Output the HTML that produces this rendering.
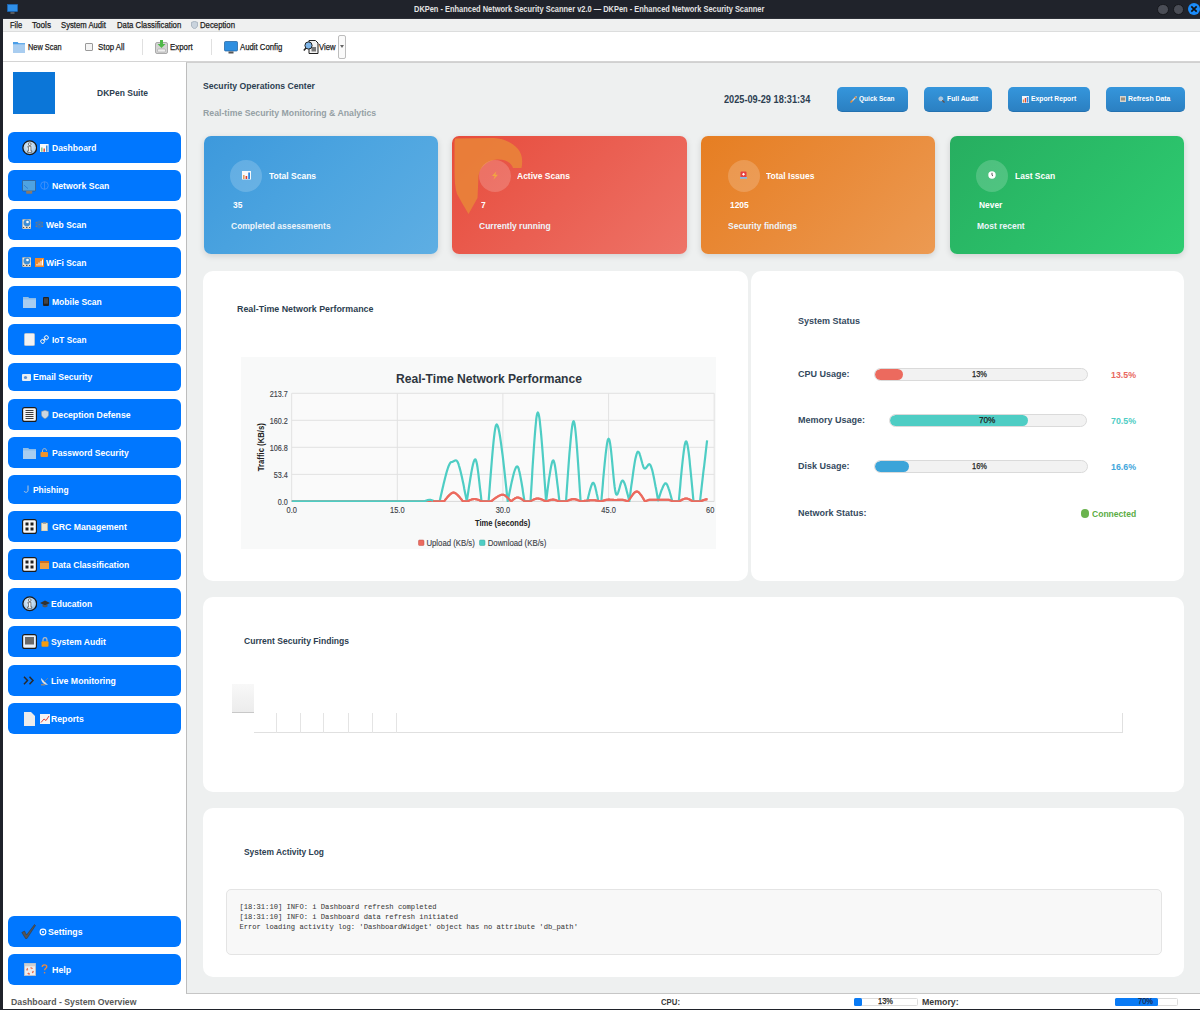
<!DOCTYPE html>
<html><head><meta charset="utf-8">
<style>
*{box-sizing:border-box;margin:0;padding:0}
html,body{width:1200px;height:1010px;overflow:hidden;background:#1f222a;font-family:"Liberation Sans",sans-serif}
.a{position:absolute}
.t{position:absolute;white-space:nowrap;line-height:1}
.r{-webkit-text-stroke:0.25px currentColor}
.m{-webkit-text-stroke:0.05px currentColor}
.nav{position:absolute;left:8px;width:173px;background:#0077ff;border-radius:6px}
.card{position:absolute;top:136px;height:118px;border-radius:7px;box-shadow:0 2px 6px rgba(0,0,0,.13)}
.circ{position:absolute;width:32px;height:32px;border-radius:50%;background:rgba(255,255,255,.18)}
.panel{position:absolute;background:#fff;border-radius:10px}
.hbtn{position:absolute;top:87px;height:24.5px;border-radius:5px;background:linear-gradient(#3596dc,#2b80c2);border-bottom:1px solid #2371b0}
.bar{position:absolute;height:13px;border-radius:6.5px;background:#f2f2f2;border:1px solid #dadada;overflow:hidden}
.chunk{position:absolute;left:0;top:0;bottom:0;border-radius:6px}
</style></head><body>
<div class="a" style="left:0;top:0;width:1200px;height:19px;background:#20232b"></div>
<div class="a" style="left:3px;top:17.5px;width:1197px;height:1px;background:#2c2f37"></div>
<div class="a" style="left:3px;top:19px;width:1197px;height:13px;background:#eff0f0;border-bottom:1px solid #dcdddd"></div>
<div class="a" style="left:3px;top:32px;width:1197px;height:30px;background:#fff;border-bottom:1px solid #d4d4d4"></div>
<div class="a" style="left:3px;top:62px;width:183px;height:932px;background:#fff"></div>
<div class="a" style="left:186px;top:62px;width:1014px;height:932px;background:#eef0f0;border-left:1px solid #bdbdbd;border-top:1px solid #d0d0d0;border-bottom:1px solid #c6c6c6"></div>
<div class="a" style="left:3px;top:994px;width:1197px;height:14.5px;background:#fff"></div>
<svg class="a" style="left:7px;top:4px" width="11" height="11" viewBox="0 0 11 11"><rect x="0.5" y="0.5" width="10" height="7" fill="#2f8fe8" stroke="#1b6cc0" stroke-width="0.6"/><rect x="3.5" y="8.2" width="4" height="1.6" fill="#666"/></svg>
<div class="t" style="left:413.50px;top:4.79px;font-size:8.93px;font-weight:bold;color:#e4e4e4;font-family:'Liberation Sans',sans-serif;transform:scaleX(0.8351);transform-origin:0 0;">DKPen - Enhanced Network Security Scanner v2.0 — DKPen - Enhanced Network Security Scanner</div>
<div class="a" style="left:1157px;top:3.5px;width:11.5px;height:11.5px;border-radius:50%;background:#4a4d56;border:1px solid #16181d"></div>
<div class="a" style="left:1172.5px;top:3.5px;width:11.5px;height:11.5px;border-radius:50%;background:#4a4d56;border:1px solid #16181d"></div>
<div class="a" style="left:1188px;top:3px;width:12px;height:12px;border-radius:50%;background:#1b8cfa"></div>
<svg class="a" style="left:1190px;top:5px" width="8" height="8" viewBox="0 0 8 8"><path d="M1.3 1.3L6.7 6.7M6.7 1.3L1.3 6.7" stroke="#111" stroke-width="1.7"/></svg>
<div class="t r" style="left:10.00px;top:21.10px;font-size:8.82px;font-weight:normal;color:#1c1c1c;font-family:'Liberation Sans',sans-serif;transform:scaleX(0.8586);transform-origin:0 0;">File</div>
<div class="t r" style="left:32.00px;top:21.10px;font-size:8.82px;font-weight:normal;color:#1c1c1c;font-family:'Liberation Sans',sans-serif;transform:scaleX(0.9230);transform-origin:0 0;">Tools</div>
<div class="t r" style="left:61.00px;top:21.10px;font-size:8.82px;font-weight:normal;color:#1c1c1c;font-family:'Liberation Sans',sans-serif;transform:scaleX(0.8742);transform-origin:0 0;">System Audit</div>
<div class="t r" style="left:116.70px;top:21.10px;font-size:8.82px;font-weight:normal;color:#1c1c1c;font-family:'Liberation Sans',sans-serif;transform:scaleX(0.8804);transform-origin:0 0;">Data Classification</div>
<div class="t r" style="left:200.00px;top:21.10px;font-size:8.82px;font-weight:normal;color:#1c1c1c;font-family:'Liberation Sans',sans-serif;transform:scaleX(0.8812);transform-origin:0 0;">Deception</div>
<svg class="a" style="left:191px;top:21px" width="7" height="8" viewBox="0 0 7 8"><path d="M3.5 0.3L6.6 1.4V4C6.6 5.9 5 7.2 3.5 7.8C2 7.2 0.4 5.9 0.4 4V1.4Z" fill="#c9d3dd" stroke="#8a99a8" stroke-width="0.6"/></svg>
<div class="t r" style="left:27.50px;top:42.72px;font-size:9.35px;font-weight:normal;color:#1c1c1c;font-family:'Liberation Sans',sans-serif;transform:scaleX(0.7912);transform-origin:0 0;">New Scan</div>
<div class="t r" style="left:97.50px;top:42.72px;font-size:9.35px;font-weight:normal;color:#1c1c1c;font-family:'Liberation Sans',sans-serif;transform:scaleX(0.8363);transform-origin:0 0;">Stop All</div>
<div class="t r" style="left:170.30px;top:42.72px;font-size:9.35px;font-weight:normal;color:#1c1c1c;font-family:'Liberation Sans',sans-serif;transform:scaleX(0.8405);transform-origin:0 0;">Export</div>
<div class="t r" style="left:239.70px;top:42.72px;font-size:9.35px;font-weight:normal;color:#1c1c1c;font-family:'Liberation Sans',sans-serif;transform:scaleX(0.8309);transform-origin:0 0;">Audit Config</div>
<div class="t r" style="left:319.00px;top:42.72px;font-size:9.35px;font-weight:normal;color:#1c1c1c;font-family:'Liberation Sans',sans-serif;transform:scaleX(0.8205);transform-origin:0 0;">View</div>
<svg class="a" style="left:13px;top:41px" width="12" height="12" viewBox="0 0 12 12"><path d="M0 1.2H4.5L5.5 2.3H12V12H0Z" fill="#a9cdf0"/><path d="M0 1H4.6L5.6 2.2H12V3.3H0Z" fill="#4a9ee8"/></svg>
<div class="a" style="left:85px;top:43px;width:8px;height:8px;border:1px solid #9a9a9a;background:#f4f4f4;border-radius:1px"></div>
<div class="a" style="left:142px;top:39px;width:1px;height:16px;background:#e0e0e0"></div>
<svg class="a" style="left:155px;top:40px" width="13" height="14" viewBox="0 0 13 14"><rect x="0.5" y="2.5" width="12" height="11" rx="1.5" fill="#d4d4d4" stroke="#8f8f8f" stroke-width="0.7"/><rect x="2.5" y="9" width="8" height="3" rx="1" fill="#eee" stroke="#999" stroke-width="0.5"/><path d="M5 0H8V4H10.5L6.5 8L2.5 4H5Z" fill="#4fb848"/></svg>
<div class="a" style="left:211px;top:39px;width:1px;height:16px;background:#e0e0e0"></div>
<svg class="a" style="left:224px;top:40.5px" width="14" height="13" viewBox="0 0 14 13"><rect x="0.5" y="0.5" width="13" height="9.5" rx="1" fill="#2e8fe0" stroke="#1c5f9e" stroke-width="0.7"/><rect x="4.5" y="10.5" width="5" height="2" fill="#555"/></svg>
<svg class="a" style="left:303px;top:39px" width="16" height="16" viewBox="0 0 16 16"><path d="M6 1.5H12.5L15 4V14.5H6Z" fill="#f2f2f2" stroke="#222" stroke-width="1"/><rect x="8.5" y="8" width="4.5" height="4.5" fill="#777"/><circle cx="5.5" cy="6.5" r="3.6" fill="#7fb6ea" stroke="#222" stroke-width="1"/><path d="M3 9L0.8 11.5" stroke="#222" stroke-width="1.5"/></svg>
<div class="a" style="left:338px;top:35px;width:8px;height:24px;border:1px solid #bdbdbd;border-radius:2px;background:#fafafa"></div>
<svg class="a" style="left:340px;top:45px" width="4" height="3" viewBox="0 0 4 3"><path d="M0 0H4L2 3Z" fill="#666"/></svg>
<div class="a" style="left:13px;top:72px;width:42px;height:42px;background:#0b76d8"></div>
<div class="t" style="left:97.00px;top:88.47px;font-size:9.66px;font-weight:bold;color:#2c3e50;font-family:'Liberation Sans',sans-serif;transform:scaleX(0.8798);transform-origin:0 0;">DKPen Suite</div>
<div class="nav" style="top:132px;height:31px"></div>
<svg class="a" style="left:21.6px;top:140.2px" width="15.5" height="15.5" viewBox="0 0 15.5 15.5"><defs><radialGradient id="ig" cx="0.45" cy="0.4" r="0.6"><stop offset="0" stop-color="#e6f2fb"/><stop offset="1" stop-color="#9cc3e6"/></radialGradient></defs><circle cx="7.75" cy="7.75" r="6.9" fill="url(#ig)" stroke="#1a1a1a" stroke-width="1.3"/><circle cx="7.75" cy="4.1" r="1.35" fill="#fff" stroke="#333" stroke-width="0.6"/><path d="M5.9 6.2H8.9V10.9H9.8V12.3H5.6V10.9H6.6V7.4H5.9Z" fill="#fff" stroke="#333" stroke-width="0.6"/></svg>
<svg class="a" style="left:40.2px;top:143.5px" width="8.6" height="8.3" viewBox="0 0 8.6 8.3"><rect width="8.6" height="8.3" fill="#f8fafc"/><rect x="1.2" y="3.5" width="1.3" height="4.3" fill="#6cc070"/><rect x="3.5" y="4.5" width="1.4" height="3.3" fill="#e8402c"/><rect x="6" y="1.5" width="1.5" height="6.3" fill="#3c8ee0"/></svg>
<div class="t" style="left:51.90px;top:142.83px;font-size:9.61px;font-weight:bold;color:#fff;font-family:'Liberation Sans',sans-serif;transform:scaleX(0.8848);transform-origin:0 0;">Dashboard</div>
<div class="nav" style="top:170px;height:31px"></div>
<svg class="a" style="left:22.3px;top:179.5px" width="14" height="14" viewBox="0 0 14 14"><rect x="0.4" y="0.4" width="13.2" height="10.6" rx="0.8" fill="#4ea3e2" stroke="#3a5a80" stroke-width="0.8"/><path d="M2 5L4 7L6 8.5" stroke="#2a78d0" stroke-width="0.8" fill="none"/><rect x="4.2" y="11" width="6" height="2.7" fill="#8a7a6a"/></svg>
<svg class="a" style="left:40.0px;top:181.2px" width="9" height="9" viewBox="0 0 9 9"><circle cx="4.5" cy="4.5" r="3.8" fill="none" stroke="#3d8ff8" stroke-width="1"/><path d="M4.5 0.7V8.3" stroke="#3d8ff8" stroke-width="0.9"/></svg>
<div class="t" style="left:51.50px;top:180.83px;font-size:9.61px;font-weight:bold;color:#fff;font-family:'Liberation Sans',sans-serif;transform:scaleX(0.9050);transform-origin:0 0;">Network Scan</div>
<div class="nav" style="top:209px;height:31px"></div>
<svg class="a" style="left:21.8px;top:219.3px" width="9.5" height="10.2" viewBox="0 0 9.5 10.2"><rect x="0.3" y="0.3" width="8.9" height="9.6" rx="1" fill="#e9e2d6" stroke="#9a8f80" stroke-width="0.5"/><circle cx="4.9" cy="4" r="3.4" fill="#3f8fd6"/><circle cx="5.5" cy="3" r="1.3" fill="#fff"/><rect x="1" y="8" width="1.2" height="1" fill="#555"/><rect x="4" y="8" width="1.5" height="1" fill="#555"/><rect x="7" y="8" width="1.2" height="1" fill="#555"/></svg>
<svg class="a" style="left:35.3px;top:219.8px" width="8.5" height="9" viewBox="0 0 8.5 9"><path d="M4.25 0.3L8.1 2.4V6.6L4.25 8.7L0.4 6.6V2.4Z" fill="#2d78cc"/><circle cx="1.3" cy="2.6" r="0.6" fill="#a07850"/><circle cx="7.2" cy="2.6" r="0.6" fill="#a07850"/><circle cx="4.25" cy="4.5" r="0.6" fill="#a07850"/><circle cx="1.3" cy="6.4" r="0.6" fill="#a07850"/><circle cx="7.2" cy="6.4" r="0.6" fill="#a07850"/></svg>
<div class="t" style="left:46.00px;top:219.83px;font-size:9.61px;font-weight:bold;color:#fff;font-family:'Liberation Sans',sans-serif;transform:scaleX(0.8854);transform-origin:0 0;">Web Scan</div>
<div class="nav" style="top:247px;height:31px"></div>
<svg class="a" style="left:21.8px;top:257.3px" width="9.5" height="10.2" viewBox="0 0 9.5 10.2"><rect x="0.3" y="0.3" width="8.9" height="9.6" rx="1" fill="#e9e2d6" stroke="#9a8f80" stroke-width="0.5"/><circle cx="4.9" cy="4" r="3.4" fill="#3f8fd6"/><circle cx="5.5" cy="3" r="1.3" fill="#fff"/><rect x="1" y="8" width="1.2" height="1" fill="#555"/><rect x="4" y="8" width="1.5" height="1" fill="#555"/><rect x="7" y="8" width="1.2" height="1" fill="#555"/></svg>
<svg class="a" style="left:35.0px;top:257.5px" width="9" height="9" viewBox="0 0 9 9"><rect width="9" height="9" fill="#f08a2c"/><path d="M2 7.5V6M4 7.5V4.5M6 7.5V3M7.5 7.5V1.5" stroke="#fff" stroke-width="1"/></svg>
<div class="t" style="left:46.00px;top:257.83px;font-size:9.61px;font-weight:bold;color:#fff;font-family:'Liberation Sans',sans-serif;transform:scaleX(0.8837);transform-origin:0 0;">WiFi Scan</div>
<div class="nav" style="top:286px;height:31px"></div>
<svg class="a" style="left:22.5px;top:295.5px" width="13" height="12" viewBox="0 0 13 12"><path d="M0 1H5L6 2.2H13V12H0Z" fill="#a9cdf0"/><path d="M0 1H5L6 2.2H13V3.4H0Z" fill="#8fbde8"/></svg>
<svg class="a" style="left:43.0px;top:297.0px" width="6" height="9" viewBox="0 0 6 9"><rect x="0" y="0" width="6" height="9" rx="1" fill="#222"/><rect x="1" y="1.2" width="4" height="5.5" fill="#444"/></svg>
<div class="t" style="left:51.50px;top:296.83px;font-size:9.61px;font-weight:bold;color:#fff;font-family:'Liberation Sans',sans-serif;transform:scaleX(0.8901);transform-origin:0 0;">Mobile Scan</div>
<div class="nav" style="top:324px;height:31px"></div>
<svg class="a" style="left:23.5px;top:333.0px" width="11" height="13" viewBox="0 0 11 13"><rect x="0.3" y="0.3" width="10.4" height="12.4" rx="1.5" fill="#f2f2f2" stroke="#bbb" stroke-width="0.6"/></svg>
<svg class="a" style="left:40.0px;top:335.0px" width="9" height="9" viewBox="0 0 9 9"><path d="M3.2 5.8L5.8 3.2" stroke="#d8e4ee" stroke-width="1.2"/><rect x="0.9" y="4.6" width="3.5" height="3.5" rx="1" transform="rotate(-45 2.6 6.3)" fill="none" stroke="#d8e4ee" stroke-width="1"/><rect x="4.6" y="0.9" width="3.5" height="3.5" rx="1" transform="rotate(-45 6.3 2.6)" fill="none" stroke="#d8e4ee" stroke-width="1"/></svg>
<div class="t" style="left:51.50px;top:334.83px;font-size:9.61px;font-weight:bold;color:#fff;font-family:'Liberation Sans',sans-serif;transform:scaleX(0.8616);transform-origin:0 0;">IoT Scan</div>
<div class="nav" style="top:363px;height:28px"></div>
<svg class="a" style="left:22.0px;top:373.5px" width="9" height="7" viewBox="0 0 9 7"><rect width="9" height="7" rx="1" fill="#e8eef4"/><circle cx="3.5" cy="3.5" r="1.6" fill="#5b8fd0"/></svg>
<div class="t" style="left:33.30px;top:372.33px;font-size:9.61px;font-weight:bold;color:#fff;font-family:'Liberation Sans',sans-serif;transform:scaleX(0.8956);transform-origin:0 0;">Email Security</div>
<div class="nav" style="top:399px;height:31px"></div>
<svg class="a" style="left:21.5px;top:407.0px" width="15" height="15" viewBox="0 0 15 15"><rect x="0.6" y="0.6" width="13.8" height="13.8" rx="2" fill="#f5f5f5" stroke="#1a1a1a" stroke-width="1.1"/><path d="M3.5 3.5H11.5M3.5 5.5H11.5M3.5 7.5H11.5M3.5 9.5H11.5M3.5 11.5H11.5" stroke="#2a2a2a" stroke-width="0.9"/></svg>
<svg class="a" style="left:41.0px;top:410.0px" width="8" height="9" viewBox="0 0 8 9"><path d="M4 0.3L7.6 1.5V4.5C7.6 6.6 5.8 8 4 8.7C2.2 8 0.4 6.6 0.4 4.5V1.5Z" fill="#cbd5df" stroke="#7d8a96" stroke-width="0.5"/></svg>
<div class="t" style="left:51.50px;top:409.83px;font-size:9.61px;font-weight:bold;color:#fff;font-family:'Liberation Sans',sans-serif;transform:scaleX(0.9099);transform-origin:0 0;">Deception Defense</div>
<div class="nav" style="top:437px;height:31px"></div>
<svg class="a" style="left:22.5px;top:446.5px" width="13" height="12" viewBox="0 0 13 12"><path d="M0 1H5L6 2.2H13V12H0Z" fill="#a9cdf0"/><path d="M0 1H5L6 2.2H13V3.4H0Z" fill="#8fbde8"/></svg>
<svg class="a" style="left:40.0px;top:448.0px" width="9" height="9" viewBox="0 0 9 9"><path d="M2.5 4V2.8C2.5 1.4 3.4 0.6 4.5 0.6C5.6 0.6 6.5 1.4 6.5 2.8" stroke="#bbb" stroke-width="1" fill="none"/><rect x="0.5" y="4" width="7.5" height="5" rx="1" fill="#f0932b"/></svg>
<div class="t" style="left:51.50px;top:447.83px;font-size:9.61px;font-weight:bold;color:#fff;font-family:'Liberation Sans',sans-serif;transform:scaleX(0.8934);transform-origin:0 0;">Password Security</div>
<div class="nav" style="top:475px;height:29px"></div>
<svg class="a" style="left:23.0px;top:485.0px" width="7" height="9" viewBox="0 0 7 9"><path d="M5 0.5V5.5C5 7.5 1.5 8 1.2 6" stroke="#b9c9d8" stroke-width="1" fill="none"/></svg>
<div class="t" style="left:33.30px;top:484.83px;font-size:9.61px;font-weight:bold;color:#fff;font-family:'Liberation Sans',sans-serif;transform:scaleX(0.8777);transform-origin:0 0;">Phishing</div>
<div class="nav" style="top:511px;height:31px"></div>
<svg class="a" style="left:21.5px;top:519.0px" width="15" height="15" viewBox="0 0 15 15"><rect x="0.6" y="0.6" width="13.8" height="13.8" rx="2" fill="#f8f8f8" stroke="#1a1a1a" stroke-width="1.1"/><rect x="3.5" y="3.5" width="3" height="3" fill="#222"/><rect x="8.5" y="3.5" width="3" height="3" fill="#222"/><rect x="3.5" y="8.5" width="3" height="3" fill="#222"/><rect x="8.5" y="8.5" width="3" height="3" fill="#222"/></svg>
<svg class="a" style="left:41.0px;top:522.0px" width="7" height="9" viewBox="0 0 7 9"><rect x="0.3" y="1" width="6.4" height="8" fill="#f0e6d0" stroke="#bba77a" stroke-width="0.5"/><rect x="2" y="0.3" width="3" height="1.5" fill="#999"/></svg>
<div class="t" style="left:51.50px;top:521.83px;font-size:9.61px;font-weight:bold;color:#fff;font-family:'Liberation Sans',sans-serif;transform:scaleX(0.9052);transform-origin:0 0;">GRC Management</div>
<div class="nav" style="top:549px;height:31px"></div>
<svg class="a" style="left:21.5px;top:557.0px" width="15" height="15" viewBox="0 0 15 15"><rect x="0.6" y="0.6" width="13.8" height="13.8" rx="2" fill="#f8f8f8" stroke="#1a1a1a" stroke-width="1.1"/><rect x="3.5" y="3.5" width="3" height="3" fill="#222"/><rect x="8.5" y="3.5" width="3" height="3" fill="#222"/><rect x="3.5" y="8.5" width="3" height="3" fill="#222"/><rect x="8.5" y="8.5" width="3" height="3" fill="#222"/></svg>
<svg class="a" style="left:40.0px;top:560.0px" width="9" height="9" viewBox="0 0 9 9"><rect x="0" y="1" width="9" height="8" fill="#f0a040"/><rect x="0" y="1" width="9" height="2" fill="#d07020"/></svg>
<div class="t" style="left:51.50px;top:559.83px;font-size:9.61px;font-weight:bold;color:#fff;font-family:'Liberation Sans',sans-serif;transform:scaleX(0.9016);transform-origin:0 0;">Data Classification</div>
<div class="nav" style="top:588px;height:31px"></div>
<svg class="a" style="left:21.6px;top:596.2px" width="15.5" height="15.5" viewBox="0 0 15.5 15.5"><defs><radialGradient id="ig" cx="0.45" cy="0.4" r="0.6"><stop offset="0" stop-color="#e6f2fb"/><stop offset="1" stop-color="#9cc3e6"/></radialGradient></defs><circle cx="7.75" cy="7.75" r="6.9" fill="url(#ig)" stroke="#1a1a1a" stroke-width="1.3"/><circle cx="7.75" cy="4.1" r="1.35" fill="#fff" stroke="#333" stroke-width="0.6"/><path d="M5.9 6.2H8.9V10.9H9.8V12.3H5.6V10.9H6.6V7.4H5.9Z" fill="#fff" stroke="#333" stroke-width="0.6"/></svg>
<svg class="a" style="left:40.0px;top:600.0px" width="10" height="8" viewBox="0 0 10 8"><path d="M0 3L5 0.5L10 3L5 5.5Z" fill="#333"/><path d="M2.5 4.2V6.5C3.5 7.5 6.5 7.5 7.5 6.5V4.2L5 5.5Z" fill="#555"/></svg>
<div class="t" style="left:51.30px;top:598.83px;font-size:9.61px;font-weight:bold;color:#fff;font-family:'Liberation Sans',sans-serif;transform:scaleX(0.8871);transform-origin:0 0;">Education</div>
<div class="nav" style="top:626px;height:31px"></div>
<svg class="a" style="left:21.5px;top:634.0px" width="15" height="15" viewBox="0 0 15 15"><rect x="0.6" y="0.6" width="13.8" height="13.8" rx="2" fill="#e8f0f8" stroke="#1a1a1a" stroke-width="1.1"/><rect x="3" y="3" width="9" height="7.5" fill="#6a6a6a"/></svg>
<svg class="a" style="left:41.0px;top:636.5px" width="8" height="10" viewBox="0 0 8 10"><path d="M2 4.5V3C2 1.5 3 0.6 4 0.6C5 0.6 6 1.5 6 3V4.5" stroke="#bbb" stroke-width="1.1" fill="none"/><rect x="0.5" y="4.3" width="7" height="5.5" rx="1" fill="#f39c12"/></svg>
<div class="t" style="left:51.30px;top:636.83px;font-size:9.61px;font-weight:bold;color:#fff;font-family:'Liberation Sans',sans-serif;transform:scaleX(0.8995);transform-origin:0 0;">System Audit</div>
<div class="nav" style="top:665px;height:31px"></div>
<svg class="a" style="left:23.0px;top:675.5px" width="12" height="9" viewBox="0 0 12 9"><path d="M1 0.8L4.5 4.5L1 8.2M6.5 0.8L10 4.5L6.5 8.2" stroke="#2a2a2a" stroke-width="1.5" fill="none"/></svg>
<svg class="a" style="left:40.0px;top:675.5px" width="10" height="10" viewBox="0 0 10 10"><path d="M1 2C1 6 4 9 8 9Z" fill="#d8dde2"/><path d="M4 6L8 2" stroke="#888" stroke-width="0.8"/><rect x="1" y="8" width="4" height="1.5" fill="#888"/></svg>
<div class="t" style="left:51.30px;top:675.83px;font-size:9.61px;font-weight:bold;color:#fff;font-family:'Liberation Sans',sans-serif;transform:scaleX(0.9089);transform-origin:0 0;">Live Monitoring</div>
<div class="nav" style="top:703px;height:31px"></div>
<svg class="a" style="left:23.5px;top:711.5px" width="11" height="14" viewBox="0 0 11 14"><path d="M0 0H7L11 4V14H0Z" fill="#ececec"/></svg>
<svg class="a" style="left:40.0px;top:714.0px" width="10" height="10" viewBox="0 0 10 10"><rect width="10" height="10" fill="#f4f4f4"/><path d="M1 8.5L4 5L6 6.5L9 2" stroke="#e0403a" stroke-width="1" fill="none"/></svg>
<div class="t" style="left:51.30px;top:713.83px;font-size:9.61px;font-weight:bold;color:#fff;font-family:'Liberation Sans',sans-serif;transform:scaleX(0.9064);transform-origin:0 0;">Reports</div>
<div class="nav" style="top:916px;height:31px"></div>
<svg class="a" style="left:21.0px;top:924.0px" width="15" height="15" viewBox="0 0 15 15"><path d="M0.8 8.5L3.5 7L5.5 11L13.5 0.5L14.5 1.5L6 14.5H4.5Z" fill="#555" stroke="#333" stroke-width="0.5"/></svg>
<svg class="a" style="left:38.5px;top:928.0px" width="8" height="8" viewBox="0 0 8 8"><circle cx="4" cy="4" r="2.9" fill="none" stroke="#fff" stroke-width="1.1"/><circle cx="4" cy="4" r="1" fill="#fff"/></svg>
<div class="t" style="left:48.30px;top:926.83px;font-size:9.61px;font-weight:bold;color:#fff;font-family:'Liberation Sans',sans-serif;transform:scaleX(0.9129);transform-origin:0 0;">Settings</div>
<div class="nav" style="top:954px;height:31px"></div>
<svg class="a" style="left:23.5px;top:963.0px" width="12" height="13" viewBox="0 0 12 13"><rect x="0.3" y="0.3" width="11.4" height="12.4" fill="#ececec" stroke="#bbb" stroke-width="0.6"/><rect x="1" y="0.8" width="10" height="2.5" fill="#cfcfcf"/><circle cx="6" cy="7.8" r="3.2" fill="none" stroke="#e86a4a" stroke-width="1.4" stroke-dasharray="2.5 2.5"/><circle cx="6" cy="7.8" r="3.2" fill="none" stroke="#f0f0f0" stroke-width="1.4" stroke-dasharray="2.5 2.5" stroke-dashoffset="2.5"/></svg>
<svg class="a" style="left:41.0px;top:964.0px" width="7" height="10" viewBox="0 0 7 10"><path d="M1.2 3C1.2 1.5 2.2 0.8 3.5 0.8C4.8 0.8 5.8 1.6 5.8 2.8C5.8 4.2 3.6 4.5 3.6 6.3" stroke="#ef8a3c" stroke-width="1.3" fill="none"/><circle cx="3.6" cy="8.7" r="0.8" fill="#ef8a3c"/></svg>
<div class="t" style="left:51.50px;top:964.83px;font-size:9.61px;font-weight:bold;color:#fff;font-family:'Liberation Sans',sans-serif;transform:scaleX(0.9270);transform-origin:0 0;">Help</div>
<div class="t" style="left:203.30px;top:80.64px;font-size:9.87px;font-weight:bold;color:#2c3e50;font-family:'Liberation Sans',sans-serif;transform:scaleX(0.8764);transform-origin:0 0;">Security Operations Center</div>
<div class="t" style="left:203.30px;top:108.44px;font-size:9.87px;font-weight:bold;color:#95a0a5;font-family:'Liberation Sans',sans-serif;transform:scaleX(0.8848);transform-origin:0 0;">Real-time Security Monitoring &amp; Analytics</div>
<div class="t" style="left:724.40px;top:95.30px;font-size:10.08px;font-weight:bold;color:#2c3e50;font-family:'Liberation Sans',sans-serif;transform:scaleX(0.9112);transform-origin:0 0;">2025-09-29 18:31:34</div>
<div class="hbtn" style="left:837.0px;width:70.5px"></div>
<div class="t" style="left:858.70px;top:94.74px;font-size:7.98px;font-weight:bold;color:#fff;font-family:'Liberation Sans',sans-serif;transform:scaleX(0.8190);transform-origin:0 0;">Quick Scan</div>
<div class="hbtn" style="left:924.0px;width:67.5px"></div>
<div class="t" style="left:946.70px;top:94.74px;font-size:7.98px;font-weight:bold;color:#fff;font-family:'Liberation Sans',sans-serif;transform:scaleX(0.8495);transform-origin:0 0;">Full Audit</div>
<div class="hbtn" style="left:1008.0px;width:81.5px"></div>
<div class="t" style="left:1030.70px;top:94.74px;font-size:7.98px;font-weight:bold;color:#fff;font-family:'Liberation Sans',sans-serif;transform:scaleX(0.8496);transform-origin:0 0;">Export Report</div>
<div class="hbtn" style="left:1106.0px;width:78.5px"></div>
<div class="t" style="left:1128.40px;top:94.74px;font-size:7.98px;font-weight:bold;color:#fff;font-family:'Liberation Sans',sans-serif;transform:scaleX(0.8623);transform-origin:0 0;">Refresh Data</div>
<svg class="a" style="left:850px;top:96px" width="7" height="7" viewBox="0 0 7 7"><path d="M6.5 0.5L2 5" stroke="#cfd8e0" stroke-width="1.2"/><circle cx="5.5" cy="1.5" r="1" fill="#f08c30"/><path d="M0.5 6.5L2.5 4.5" stroke="#f08c30" stroke-width="1.5"/></svg>
<svg class="a" style="left:938px;top:96px" width="7" height="7" viewBox="0 0 7 7"><circle cx="2.8" cy="2.8" r="2" fill="#9cc8ee" stroke="#ccc" stroke-width="0.8"/><path d="M4.3 4.3L6.5 6.5" stroke="#6a4a3a" stroke-width="1.1"/></svg>
<svg class="a" style="left:1022px;top:95.5px" width="7" height="7" viewBox="0 0 7 7"><rect width="7" height="7" fill="#f0f4f8"/><rect x="0.8" y="3.5" width="1.3" height="3" fill="#e09040"/><rect x="2.8" y="2" width="1.3" height="4.5" fill="#e04030"/><rect x="4.8" y="1" width="1.5" height="5.5" fill="#3a88e0"/></svg>
<svg class="a" style="left:1120px;top:96px" width="6" height="6" viewBox="0 0 6 6"><rect width="6" height="6" fill="#d8d4cc"/><rect x="1" y="1.5" width="4" height="3" fill="#9a9080"/></svg>
<div class="card" style="left:203.5px;width:234.5px;background:linear-gradient(135deg,#3d99dc 0%,#4da5e0 50%,#5eaee3 100%)"></div>
<div class="circ" style="left:230.0px;top:159.5px"></div>
<div class="t" style="left:268.50px;top:170.50px;font-size:9.45px;font-weight:bold;color:#fff;font-family:'Liberation Sans',sans-serif;transform:scaleX(0.9000);transform-origin:0 0;">Total Scans</div>
<div class="t" style="left:232.50px;top:200.52px;font-size:9.35px;font-weight:bold;color:#fff;font-family:'Liberation Sans',sans-serif;transform:scaleX(0.9000);transform-origin:0 0;">35</div>
<div class="t" style="left:230.80px;top:220.50px;font-size:9.45px;font-weight:bold;color:#eef5fb;font-family:'Liberation Sans',sans-serif;transform:scaleX(0.9000);transform-origin:0 0;">Completed assessments</div>
<div class="card" style="left:452.0px;width:234.5px;background:linear-gradient(135deg,#e74c3c 0%,#ea5f52 50%,#ee7367 100%)"></div>
<svg class="a" style="left:452px;top:136px" width="80" height="90" viewBox="452 136 80 90"><path d="M455 138.5 L494 138 C503 138.5 512 142 518 149 C522 154 523 160 521.5 168 L513 168 C511 162 505 159 497 159.5 C488 160.5 480 166 478.5 176 L477.5 198 L468.5 214 C465 208 461 201 457 194 C455 188 454.5 180 454.5 170 L454.5 142 Z" fill="#e98838" fill-opacity="0.82"/></svg>
<div class="circ" style="left:478.5px;top:159.5px"></div>
<div class="t" style="left:517.00px;top:170.50px;font-size:9.45px;font-weight:bold;color:#fff;font-family:'Liberation Sans',sans-serif;transform:scaleX(0.9000);transform-origin:0 0;">Active Scans</div>
<div class="t" style="left:481.00px;top:200.52px;font-size:9.35px;font-weight:bold;color:#fff;font-family:'Liberation Sans',sans-serif;transform:scaleX(0.9000);transform-origin:0 0;">7</div>
<div class="t" style="left:479.30px;top:220.50px;font-size:9.45px;font-weight:bold;color:#eef5fb;font-family:'Liberation Sans',sans-serif;transform:scaleX(0.9000);transform-origin:0 0;">Currently running</div>
<div class="card" style="left:701.0px;width:233.5px;background:linear-gradient(135deg,#e67e22 0%,#e98b3a 50%,#ec9a52 100%)"></div>
<div class="circ" style="left:727.5px;top:159.5px"></div>
<div class="t" style="left:766.00px;top:170.50px;font-size:9.45px;font-weight:bold;color:#fff;font-family:'Liberation Sans',sans-serif;transform:scaleX(0.9000);transform-origin:0 0;">Total Issues</div>
<div class="t" style="left:730.00px;top:200.52px;font-size:9.35px;font-weight:bold;color:#fff;font-family:'Liberation Sans',sans-serif;transform:scaleX(0.9000);transform-origin:0 0;">1205</div>
<div class="t" style="left:728.30px;top:220.50px;font-size:9.45px;font-weight:bold;color:#eef5fb;font-family:'Liberation Sans',sans-serif;transform:scaleX(0.9000);transform-origin:0 0;">Security findings</div>
<div class="card" style="left:949.5px;width:234.5px;background:linear-gradient(135deg,#27ae60 0%,#2abd68 50%,#2ecc71 100%)"></div>
<div class="circ" style="left:976.0px;top:159.5px"></div>
<div class="t" style="left:1014.50px;top:170.50px;font-size:9.45px;font-weight:bold;color:#fff;font-family:'Liberation Sans',sans-serif;transform:scaleX(0.9000);transform-origin:0 0;">Last Scan</div>
<div class="t" style="left:978.50px;top:200.52px;font-size:9.35px;font-weight:bold;color:#fff;font-family:'Liberation Sans',sans-serif;transform:scaleX(0.9000);transform-origin:0 0;">Never</div>
<div class="t" style="left:976.80px;top:220.50px;font-size:9.45px;font-weight:bold;color:#eef5fb;font-family:'Liberation Sans',sans-serif;transform:scaleX(0.9000);transform-origin:0 0;">Most recent</div>
<svg class="a" style="left:242px;top:171px" width="9" height="8.5" viewBox="0 0 9 8.5"><rect width="9" height="8.5" fill="#f6f8fa"/><rect x="1" y="4" width="1.6" height="4" fill="#e0a060"/><rect x="3.6" y="5" width="1.6" height="3" fill="#e03828"/><rect x="6.2" y="1.5" width="1.8" height="6.5" fill="#2f86e0"/></svg>
<svg class="a" style="left:491px;top:170.5px" width="8" height="9" viewBox="0 0 8 9"><path d="M5.5 0.3L1 5H3.8L2.3 8.7L7 3.8H4.2Z" fill="#f2a640"/></svg>
<svg class="a" style="left:740px;top:171px" width="7" height="8" viewBox="0 0 7 8"><rect x="0.5" y="0.5" width="6" height="6" rx="1" fill="#e54040"/><path d="M3.5 1.8L5 3.2L3.5 4.8L2 3.2Z" fill="#fff"/><rect x="0" y="6" width="7" height="1.8" fill="#8ab8e0"/></svg>
<svg class="a" style="left:987.5px;top:171px" width="8" height="8" viewBox="0 0 8 8"><circle cx="4" cy="4" r="3.7" fill="#fff"/><path d="M4 1.8V4.2L5 5" stroke="#444" stroke-width="0.9" fill="none"/></svg>
<div class="panel" style="left:203px;top:271px;width:545px;height:310px"></div>
<div class="panel" style="left:750.5px;top:271px;width:433.5px;height:310px"></div>
<div class="panel" style="left:203px;top:597px;width:981px;height:195px"></div>
<div class="panel" style="left:203px;top:808px;width:981px;height:169px"></div>
<div class="t" style="left:237.30px;top:305.44px;font-size:9.24px;font-weight:bold;color:#2c3e50;font-family:'Liberation Sans',sans-serif;transform:scaleX(0.9608);transform-origin:0 0;">Real-Time Network Performance</div>
<div class="t" style="left:243.80px;top:637.04px;font-size:9.24px;font-weight:bold;color:#2c3e50;font-family:'Liberation Sans',sans-serif;transform:scaleX(0.9255);transform-origin:0 0;">Current Security Findings</div>
<div class="t" style="left:243.70px;top:847.84px;font-size:9.24px;font-weight:bold;color:#2c3e50;font-family:'Liberation Sans',sans-serif;transform:scaleX(0.9094);transform-origin:0 0;">System Activity Log</div>
<svg class="a" style="left:0;top:0" width="1200" height="600" viewBox="0 0 1200 600"><defs><clipPath id="cr"><rect x="433" y="380" width="290" height="121.9"/></clipPath><clipPath id="cp"><rect x="291.2" y="380" width="430" height="121.9"/></clipPath></defs><rect x="241" y="357" width="475" height="192" fill="#f8f9f9"/><rect x="291.7" y="393.3" width="422.5" height="108.1" fill="#fafafa"/><path d="M291.7 393.3H714.2" stroke="#e2e2e2" stroke-width="1"/><path d="M291.7 420.3H714.2" stroke="#e2e2e2" stroke-width="1"/><path d="M291.7 447.3H714.2" stroke="#e2e2e2" stroke-width="1"/><path d="M291.7 474.4H714.2" stroke="#e2e2e2" stroke-width="1"/><path d="M291.7 393.3V501.4" stroke="#e2e2e2" stroke-width="1"/><path d="M397.3 393.3V501.4" stroke="#e2e2e2" stroke-width="1"/><path d="M502.9 393.3V501.4" stroke="#e2e2e2" stroke-width="1"/><path d="M608.6 393.3V501.4" stroke="#e2e2e2" stroke-width="1"/><path d="M714.2 393.3V501.4" stroke="#e2e2e2" stroke-width="1"/><path d="M291.7 501.4H714.2" stroke="#d8d8d8" stroke-width="1"/><path d="M291.7 501.4L292.2 501.4L292.7 501.4L293.2 501.4L293.7 501.4L294.2 501.4L294.7 501.4L295.2 501.4L295.7 501.4L296.2 501.4L296.7 501.4L297.2 501.4L297.7 501.4L298.2 501.4L298.7 501.4L299.2 501.4L299.7 501.4L300.2 501.4L300.7 501.4L301.2 501.4L301.7 501.4L302.2 501.4L302.7 501.4L303.2 501.4L303.7 501.4L304.2 501.4L304.7 501.4L305.2 501.4L305.7 501.4L306.2 501.4L306.7 501.4L307.2 501.4L307.7 501.4L308.2 501.4L308.7 501.4L309.2 501.4L309.7 501.4L310.2 501.4L310.7 501.4L311.2 501.4L311.7 501.4L312.2 501.4L312.7 501.4L313.2 501.4L313.7 501.4L314.2 501.4L314.7 501.4L315.2 501.4L315.7 501.4L316.2 501.4L316.7 501.4L317.2 501.4L317.7 501.4L318.2 501.4L318.7 501.4L319.2 501.4L319.7 501.4L320.2 501.4L320.7 501.4L321.2 501.4L321.7 501.4L322.2 501.4L322.7 501.4L323.2 501.4L323.7 501.4L324.2 501.4L324.7 501.4L325.2 501.4L325.7 501.4L326.2 501.4L326.7 501.4L327.2 501.4L327.7 501.4L328.2 501.4L328.7 501.4L329.2 501.4L329.7 501.4L330.1 501.4L330.6 501.4L331.1 501.4L331.6 501.4L332.1 501.4L332.6 501.4L333.1 501.4L333.6 501.4L334.1 501.4L334.6 501.4L335.1 501.4L335.6 501.4L336.1 501.4L336.6 501.4L337.1 501.4L337.6 501.4L338.1 501.4L338.6 501.4L339.1 501.4L339.6 501.4L340.1 501.4L340.6 501.4L341.1 501.4L341.6 501.4L342.1 501.4L342.6 501.4L343.1 501.4L343.6 501.4L344.1 501.4L344.6 501.4L345.1 501.4L345.6 501.4L346.1 501.4L346.6 501.4L347.1 501.4L347.6 501.4L348.1 501.4L348.6 501.4L349.1 501.4L349.6 501.4L350.1 501.4L350.6 501.4L351.1 501.4L351.6 501.4L352.1 501.4L352.6 501.4L353.1 501.4L353.6 501.4L354.1 501.4L354.6 501.4L355.1 501.4L355.6 501.4L356.1 501.4L356.6 501.4L357.1 501.4L357.6 501.4L358.1 501.4L358.6 501.4L359.1 501.4L359.6 501.4L360.1 501.4L360.6 501.4L361.1 501.4L361.6 501.4L362.1 501.4L362.6 501.4L363.1 501.4L363.6 501.4L364.1 501.4L364.6 501.4L365.1 501.4L365.6 501.4L366.1 501.4L366.6 501.4L367.1 501.4L367.6 501.4L368.1 501.4L368.6 501.4L369.1 501.4L369.6 501.4L370.1 501.4L370.6 501.4L371.1 501.4L371.6 501.4L372.1 501.4L372.6 501.4L373.1 501.4L373.6 501.4L374.1 501.4L374.6 501.4L375.1 501.4L375.6 501.4L376.1 501.4L376.6 501.4L377.1 501.4L377.6 501.4L378.1 501.4L378.6 501.4L379.1 501.4L379.6 501.4L380.1 501.4L380.6 501.4L381.1 501.4L381.6 501.4L382.1 501.4L382.6 501.4L383.1 501.4L383.6 501.4L384.1 501.4L384.6 501.4L385.1 501.4L385.6 501.4L386.1 501.4L386.6 501.4L387.1 501.4L387.6 501.4L388.1 501.4L388.6 501.4L389.1 501.4L389.6 501.4L390.1 501.4L390.6 501.4L391.1 501.4L391.6 501.4L392.1 501.4L392.6 501.4L393.1 501.4L393.6 501.4L394.1 501.4L394.6 501.4L395.1 501.4L395.6 501.4L396.1 501.4L396.6 501.4L397.1 501.4L397.6 501.4L398.1 501.4L398.6 501.4L399.1 501.4L399.6 501.4L400.1 501.4L400.6 501.4L401.1 501.4L401.6 501.4L402.1 501.4L402.6 501.4L403.1 501.4L403.6 501.4L404.1 501.4L404.6 501.4L405.1 501.4L405.6 501.4L406.0 501.4L406.5 501.4L407.0 501.4L407.5 501.4L408.0 501.4L408.5 501.4L409.0 501.4L409.5 501.4L410.0 501.4L410.5 501.4L411.0 501.4L411.5 501.4L412.0 501.4L412.5 501.4L413.0 501.4L413.5 501.4L414.0 501.4L414.5 501.4L415.0 501.4L415.5 501.4L416.0 501.4L416.5 501.4L417.0 501.4L417.5 501.4L418.0 501.4L418.5 501.4L419.0 501.4L419.5 501.4L420.0 501.4L420.5 501.4L421.0 501.4L421.5 501.4L422.0 501.4L422.5 501.4L423.0 501.4L423.5 501.4L424.0 501.4L424.5 501.4L425.0 501.4L425.5 501.4L426.0 501.4L426.5 501.4L427.0 501.4L427.5 501.4L428.0 501.4L428.5 501.4L429.0 501.4L429.5 501.4L430.0 501.4L430.5 501.4L431.0 501.4L431.5 501.4L432.0 501.4L432.5 501.4L433.0 501.4L433.5 501.4L434.0 501.4L434.5 501.4L435.0 501.4L435.5 501.4L436.0 501.4L436.5 501.4L437.0 501.4L437.5 501.4L438.0 501.4L438.5 501.4L439.0 501.4L439.5 501.4L440.0 501.4L440.5 501.4L441.0 501.4L441.5 501.4L442.0 501.4L442.5 501.4L443.0 501.4L443.5 501.4L444.0 501.4L444.5 500.8L445.0 500.2L445.5 499.5L446.0 498.9L446.5 498.3L447.0 497.7L447.5 497.1L448.0 496.6L448.5 496.0L449.0 495.4L449.5 494.9L450.0 494.5L450.5 494.0L451.0 493.6L451.5 493.3L452.0 493.0L452.5 492.8L453.0 492.6L453.5 492.6L454.0 492.6L454.5 492.8L455.0 493.0L455.5 493.3L456.0 493.6L456.5 494.0L457.0 494.5L457.5 494.9L458.0 495.4L458.5 496.0L459.0 496.6L459.5 497.1L460.0 497.7L460.5 498.3L461.0 498.9L461.5 499.5L462.0 500.2L462.5 500.8L463.0 501.4L463.5 501.4L464.0 501.4L464.5 501.4L465.0 501.4L465.5 501.4L466.0 501.4L466.5 501.4L467.0 501.4L467.5 501.2L468.0 501.0L468.5 500.8L469.0 500.6L469.5 500.3L470.0 500.1L470.5 499.9L470.9 499.8L471.4 499.6L471.9 499.4L472.4 499.3L472.9 499.2L473.4 499.1L473.9 499.0L474.4 499.0L474.9 499.0L475.4 499.1L475.9 499.2L476.4 499.3L476.9 499.4L477.4 499.6L477.9 499.8L478.5 499.9L479.0 500.1L479.5 500.3L480.0 500.6L480.5 500.8L481.0 501.0L481.5 501.2L482.0 501.4L482.5 501.4L483.0 501.4L483.5 501.4L484.0 501.4L484.5 501.4L485.0 501.4L485.5 501.4L486.0 501.4L486.5 501.4L487.0 501.4L487.5 501.4L488.0 501.4L488.5 501.4L489.0 501.4L489.5 501.4L490.0 501.4L490.5 501.4L491.0 501.4L491.5 501.0L492.0 500.7L492.5 500.3L493.0 499.9L493.5 499.5L493.9 499.2L494.4 498.8L494.9 498.4L495.4 498.1L495.9 497.7L496.4 497.4L496.9 497.1L497.4 496.8L497.9 496.4L498.4 496.2L498.9 495.9L499.4 495.6L499.9 495.4L500.3 495.2L500.8 495.0L501.3 494.9L501.8 494.8L502.3 494.7L502.8 494.7L503.3 494.8L503.8 494.9L504.3 495.1L504.9 495.4L505.4 495.8L505.9 496.2L506.4 496.6L506.9 497.1L507.4 497.6L507.9 498.1L508.4 498.6L508.9 499.2L509.5 499.7L510.0 500.3L510.5 500.8L511.0 501.4L511.5 501.0L512.0 500.6L512.5 500.2L513.0 499.8L513.5 499.4L514.0 499.1L514.5 498.7L515.0 498.4L515.5 498.1L516.0 497.9L516.5 497.7L517.0 497.5L517.5 497.5L518.0 497.5L518.5 497.6L519.0 497.8L519.5 498.0L520.0 498.2L520.5 498.4L521.0 498.7L521.5 499.0L522.0 499.4L522.5 499.7L523.0 500.0L523.5 500.4L524.0 500.7L524.5 501.1L525.0 501.4L525.5 501.4L526.0 501.4L526.5 501.4L527.0 501.4L527.5 501.4L528.0 501.4L528.5 501.4L529.0 501.4L529.5 501.4L530.0 501.4L530.5 501.1L531.0 500.9L531.5 500.6L532.0 500.4L532.5 500.1L533.0 499.9L533.5 499.6L534.1 499.4L534.6 499.2L535.1 499.0L535.6 498.8L536.1 498.7L536.6 498.6L537.1 498.5L537.6 498.5L538.1 498.5L538.6 498.6L539.1 498.7L539.6 498.8L540.1 498.9L540.6 499.1L541.1 499.2L541.6 499.4L542.0 499.6L542.5 499.8L543.0 500.1L543.5 500.3L544.0 500.5L544.5 500.7L545.0 500.9L545.5 501.2L546.0 501.4L546.5 501.2L547.0 501.1L547.5 500.9L548.0 500.7L548.5 500.6L549.0 500.4L549.5 500.2L550.0 500.1L550.5 500.0L551.0 499.8L551.5 499.7L552.0 499.7L552.5 499.6L553.0 499.6L553.5 499.6L554.0 499.7L554.5 499.8L555.0 499.9L555.5 500.1L556.0 500.2L556.5 500.4L557.0 500.6L557.5 500.8L558.0 501.0L558.5 501.2L559.0 501.4L559.5 501.4L560.0 501.4L560.5 501.4L561.0 501.4L561.5 501.4L562.0 501.4L562.5 501.4L563.0 501.4L563.5 501.4L564.0 501.4L564.5 501.4L565.0 501.4L565.5 501.4L566.0 501.4L566.5 501.2L567.0 501.0L567.5 500.8L568.0 500.6L568.5 500.4L569.0 500.2L569.5 500.0L570.1 499.8L570.6 499.7L571.1 499.5L571.6 499.4L572.1 499.3L572.6 499.2L573.1 499.1L573.6 499.1L574.1 499.1L574.6 499.2L575.1 499.3L575.6 499.4L576.1 499.5L576.6 499.7L577.1 499.8L577.5 500.0L578.0 500.2L578.5 500.4L579.0 500.6L579.5 500.8L580.0 501.0L580.5 501.2L581.0 501.4L581.5 501.3L582.0 501.3L582.5 501.2L583.0 501.1L583.5 501.1L584.0 501.0L584.5 500.9L585.0 500.9L585.5 500.8L586.0 500.7L586.5 500.7L587.0 500.6L587.5 500.6L588.0 500.5L588.5 500.5L589.0 500.4L589.5 500.4L590.0 500.3L590.5 500.3L591.0 500.3L591.5 500.2L592.0 500.2L592.5 500.2L593.0 500.2L593.5 500.2L594.0 500.2L594.5 500.3L595.0 500.3L595.5 500.4L596.0 500.5L596.5 500.5L597.0 500.6L597.5 500.7L598.0 500.8L598.5 500.9L599.0 501.0L599.5 501.1L600.0 501.2L600.5 501.3L601.0 501.4L601.5 501.2L602.0 501.1L602.5 500.9L603.0 500.8L603.5 500.6L604.0 500.5L604.5 500.3L605.1 500.2L605.6 500.0L606.1 499.9L606.6 499.8L607.1 499.7L607.6 499.7L608.1 499.6L608.6 499.6L609.1 499.6L609.6 499.6L610.1 499.7L610.6 499.7L611.1 499.7L611.6 499.8L612.0 499.8L612.5 499.9L613.0 499.9L613.5 499.9L614.0 500.0L614.5 500.0L615.0 500.0L615.5 500.0L616.0 500.0L616.5 500.0L617.0 500.0L617.5 499.9L618.0 499.9L618.5 499.9L619.0 499.9L619.5 499.9L620.0 499.8L620.5 499.8L621.0 499.8L621.5 499.8L622.0 499.8L622.5 499.8L623.0 499.9L623.5 500.0L624.0 500.1L624.5 500.2L625.0 500.4L625.5 500.5L626.0 500.7L626.5 500.9L627.0 501.0L627.5 501.2L628.0 501.4L628.5 500.7L629.0 499.9L629.5 499.2L630.0 498.5L630.5 497.8L631.0 497.0L631.5 496.3L632.0 495.7L632.5 495.0L632.9 494.4L633.4 493.8L633.9 493.3L634.4 492.8L634.9 492.3L635.4 492.0L635.9 491.7L636.4 491.6L636.9 491.5L637.4 491.6L637.9 491.8L638.4 492.1L638.9 492.5L639.4 493.1L639.9 493.7L640.4 494.3L641.0 495.0L641.5 495.7L642.0 496.5L642.5 497.3L643.0 498.1L643.5 498.9L644.0 499.8L644.5 500.6L645.0 501.4L645.5 501.2L646.0 501.0L646.5 500.8L647.0 500.6L647.5 500.4L648.0 500.2L648.5 500.0L649.0 499.9L649.5 499.8L650.0 499.8L650.5 499.8L651.0 499.8L651.5 499.8L652.0 499.8L652.5 499.8L653.0 499.8L653.5 499.8L654.0 499.8L654.5 499.8L655.0 499.8L655.5 499.8L656.0 499.8L656.5 499.8L657.0 499.8L657.5 499.8L658.0 499.8L658.5 499.8L659.0 499.8L659.5 499.8L660.0 499.8L660.5 499.8L661.0 499.8L661.5 499.8L662.0 499.8L662.5 499.8L663.0 499.8L663.5 499.8L664.0 499.8L664.5 499.8L665.0 499.8L665.5 499.8L666.0 499.8L666.5 499.8L667.0 499.8L667.5 499.8L668.0 499.8L668.5 499.8L669.0 499.9L669.5 500.0L670.0 500.2L670.5 500.4L671.0 500.6L671.5 500.8L672.0 501.0L672.5 501.2L673.0 501.4L673.5 501.4L674.0 501.4L674.5 501.4L675.0 501.4L675.5 501.4L676.0 501.4L676.5 501.4L677.0 501.4L677.5 501.4L678.0 501.4L678.5 501.4L679.0 501.4L679.5 501.1L680.0 500.8L680.5 500.6L681.0 500.3L681.5 500.0L682.0 499.8L682.5 499.5L683.1 499.3L683.6 499.1L684.1 498.9L684.6 498.7L685.1 498.6L685.6 498.5L686.1 498.5L686.6 498.5L687.1 498.6L687.6 498.7L688.1 498.9L688.6 499.1L689.1 499.3L689.5 499.5L690.0 499.8L690.5 500.0L691.0 500.3L691.5 500.6L692.0 500.8L692.5 501.1L693.0 501.4L693.5 501.4L694.0 501.4L694.5 501.4L695.0 501.4L695.5 501.4L696.0 501.4L696.5 501.4L697.0 501.4L697.5 501.4L698.0 501.4L698.5 501.4L699.0 501.4L699.5 501.4L700.0 501.4L700.5 501.2L701.0 501.0L701.5 500.8L702.0 500.7L702.5 500.5L703.0 500.3L703.5 500.1L704.0 500.0L704.5 499.8L705.0 499.7L705.5 499.5L706.0 499.4L706.5 499.4L707.0 499.3L707.5 499.3" fill="none" stroke="#ec6a5e" stroke-width="2.1" stroke-linejoin="round" clip-path="url(#cp)"/><path d="M291.7 501.4L292.2 501.4L292.7 501.4L293.2 501.4L293.7 501.4L294.2 501.4L294.7 501.4L295.2 501.4L295.7 501.4L296.2 501.4L296.7 501.4L297.2 501.4L297.7 501.4L298.2 501.4L298.7 501.4L299.2 501.4L299.7 501.4L300.2 501.4L300.7 501.4L301.2 501.4L301.7 501.4L302.2 501.4L302.7 501.4L303.2 501.4L303.7 501.4L304.2 501.4L304.7 501.4L305.2 501.4L305.7 501.4L306.2 501.4L306.7 501.4L307.2 501.4L307.7 501.4L308.2 501.4L308.7 501.4L309.2 501.4L309.7 501.4L310.2 501.4L310.7 501.4L311.2 501.4L311.7 501.4L312.2 501.4L312.7 501.4L313.2 501.4L313.7 501.4L314.2 501.4L314.7 501.4L315.2 501.4L315.7 501.4L316.2 501.4L316.7 501.4L317.2 501.4L317.7 501.4L318.2 501.4L318.7 501.4L319.2 501.4L319.7 501.4L320.2 501.4L320.7 501.4L321.2 501.4L321.7 501.4L322.2 501.4L322.7 501.4L323.2 501.4L323.7 501.4L324.2 501.4L324.7 501.4L325.1 501.4L325.6 501.4L326.1 501.4L326.6 501.4L327.1 501.4L327.6 501.4L328.1 501.4L328.6 501.4L329.1 501.4L329.6 501.4L330.1 501.4L330.6 501.4L331.1 501.4L331.6 501.4L332.1 501.4L332.6 501.4L333.1 501.4L333.6 501.4L334.1 501.4L334.6 501.4L335.1 501.4L335.6 501.4L336.1 501.4L336.6 501.4L337.1 501.4L337.6 501.4L338.1 501.4L338.6 501.4L339.1 501.4L339.6 501.4L340.1 501.4L340.6 501.4L341.1 501.4L341.6 501.4L342.1 501.4L342.6 501.4L343.1 501.4L343.6 501.4L344.1 501.4L344.6 501.4L345.1 501.4L345.6 501.4L346.1 501.4L346.6 501.4L347.1 501.4L347.6 501.4L348.1 501.4L348.6 501.4L349.1 501.4L349.6 501.4L350.1 501.4L350.6 501.4L351.1 501.4L351.6 501.4L352.1 501.4L352.6 501.4L353.1 501.4L353.6 501.4L354.1 501.4L354.6 501.4L355.1 501.4L355.6 501.4L356.1 501.4L356.6 501.4L357.1 501.4L357.6 501.4L358.1 501.4L358.6 501.4L359.1 501.4L359.6 501.4L360.1 501.4L360.6 501.4L361.1 501.4L361.6 501.4L362.1 501.4L362.6 501.4L363.1 501.4L363.6 501.4L364.1 501.4L364.6 501.4L365.1 501.4L365.6 501.4L366.1 501.4L366.6 501.4L367.1 501.4L367.6 501.4L368.1 501.4L368.6 501.4L369.1 501.4L369.6 501.4L370.1 501.4L370.6 501.4L371.1 501.4L371.6 501.4L372.1 501.4L372.6 501.4L373.1 501.4L373.6 501.4L374.1 501.4L374.6 501.4L375.1 501.4L375.6 501.4L376.1 501.4L376.6 501.4L377.1 501.4L377.6 501.4L378.1 501.4L378.6 501.4L379.1 501.4L379.6 501.4L380.1 501.4L380.6 501.4L381.1 501.4L381.6 501.4L382.1 501.4L382.6 501.4L383.1 501.4L383.6 501.4L384.1 501.4L384.6 501.4L385.1 501.4L385.6 501.4L386.1 501.4L386.6 501.4L387.1 501.4L387.6 501.4L388.1 501.4L388.6 501.4L389.1 501.4L389.6 501.4L390.1 501.4L390.6 501.4L391.0 501.4L391.5 501.4L392.0 501.4L392.5 501.4L393.0 501.4L393.5 501.4L394.0 501.4L394.5 501.4L395.0 501.4L395.5 501.4L396.0 501.4L396.5 501.4L397.0 501.4L397.5 501.4L398.0 501.4L398.5 501.4L399.0 501.4L399.5 501.4L400.0 501.4L400.5 501.4L401.0 501.4L401.5 501.4L402.0 501.4L402.5 501.4L403.0 501.4L403.5 501.4L404.0 501.4L404.5 501.4L405.0 501.4L405.5 501.4L406.0 501.4L406.5 501.4L407.0 501.4L407.5 501.4L408.0 501.4L408.5 501.4L409.0 501.4L409.5 501.4L410.0 501.4L410.5 501.4L411.0 501.4L411.5 501.4L412.0 501.4L412.5 501.4L413.0 501.4L413.5 501.4L414.0 501.4L414.5 501.4L415.0 501.4L415.5 501.4L416.0 501.4L416.5 501.4L417.0 501.4L417.5 501.4L418.0 501.4L418.5 501.4L419.0 501.4L419.5 501.4L420.0 501.4L420.5 501.4L421.0 501.4L421.5 501.4L422.0 501.4L422.5 501.4L423.0 501.4L423.5 501.4L424.0 501.4L424.5 501.2L425.0 501.0L425.4 500.9L425.9 500.7L426.4 500.5L426.9 500.4L427.4 500.2L427.9 500.1L428.4 500.0L428.8 499.9L429.3 499.8L429.8 499.8L430.3 499.8L430.8 499.9L431.4 500.0L431.9 500.2L432.4 500.4L432.9 500.6L433.4 500.8L434.0 501.0L434.5 501.2L435.0 501.4L435.5 501.4L436.0 501.4L436.5 501.4L437.0 501.4L437.6 501.4L438.1 501.4L438.6 501.4L439.1 501.4L439.6 501.4L440.1 499.2L440.6 497.0L441.1 494.8L441.6 492.7L442.1 490.5L442.6 488.3L443.1 486.2L443.6 484.1L444.1 482.0L444.6 479.9L445.1 477.9L445.6 476.0L446.1 474.1L446.6 472.3L447.1 470.6L447.6 469.0L448.1 467.5L448.6 466.2L449.1 465.0L449.6 464.0L450.1 463.1L450.6 462.5L451.1 462.1L451.6 462.0L452.1 462.0L452.6 461.8L453.1 461.6L453.6 461.3L454.0 461.1L454.5 460.8L455.0 460.6L455.5 460.4L456.0 460.4L456.5 460.6L457.0 461.0L457.5 461.8L458.0 462.8L458.5 464.0L458.9 465.5L459.4 467.1L459.9 468.9L460.4 470.8L460.9 472.8L461.4 474.9L461.9 477.1L462.4 479.4L462.9 481.8L463.4 484.1L463.9 486.6L464.3 489.0L464.8 491.5L465.3 494.0L465.8 496.4L466.3 498.9L466.8 501.4L467.3 498.1L467.8 494.8L468.3 491.5L468.8 488.2L469.3 485.0L469.8 481.8L470.3 478.7L470.8 475.7L471.3 472.8L471.8 470.1L472.3 467.5L472.8 465.3L473.3 463.3L473.8 461.6L474.3 460.4L474.8 459.6L475.3 459.3L475.8 459.9L476.3 461.4L476.9 463.7L477.4 466.7L477.9 470.3L478.4 474.2L478.9 478.4L479.4 482.9L479.9 487.4L480.5 492.1L481.0 496.7L481.5 501.4L482.0 501.4L482.5 501.4L483.0 501.4L483.5 501.4L484.0 501.4L484.5 501.4L485.1 501.4L485.6 501.4L486.1 501.4L486.6 501.4L487.1 501.4L487.6 501.4L488.1 501.4L488.6 501.4L489.1 495.0L489.6 488.6L490.1 482.2L490.6 475.9L491.1 469.6L491.6 463.5L492.1 457.5L492.6 451.7L493.1 446.3L493.6 441.2L494.1 436.6L494.6 432.6L495.1 429.3L495.6 426.7L496.1 425.1L496.6 424.5L497.1 424.8L497.6 425.7L498.1 427.1L498.6 429.0L499.1 431.3L499.6 434.0L500.1 437.0L500.6 440.4L501.1 443.9L501.6 447.7L502.1 451.7L502.7 455.9L503.2 460.2L503.7 464.6L504.2 469.0L504.7 473.6L505.2 478.2L505.7 482.8L506.2 487.4L506.7 492.1L507.2 496.7L507.7 501.4L508.2 498.9L508.7 496.5L509.2 494.0L509.7 491.6L510.2 489.2L510.7 486.8L511.2 484.4L511.7 482.1L512.2 479.9L512.7 477.7L513.2 475.7L513.7 473.8L514.2 472.0L514.7 470.5L515.2 469.1L515.7 468.0L516.2 467.1L516.7 466.6L517.2 466.4L517.7 466.7L518.2 467.5L518.7 468.8L519.1 470.6L519.6 472.6L520.1 474.9L520.6 477.5L521.1 480.2L521.6 483.0L522.1 486.0L522.6 489.0L523.0 492.1L523.5 495.2L524.0 498.3L524.5 501.4L525.0 501.4L525.5 501.4L526.0 501.4L526.5 501.4L527.0 501.4L527.5 501.4L528.0 501.4L528.5 501.4L529.0 501.4L529.5 501.4L530.0 501.4L530.5 501.4L531.0 493.5L531.5 485.6L532.0 477.7L532.4 469.9L532.9 462.3L533.4 454.7L533.9 447.5L534.4 440.6L534.9 434.1L535.4 428.2L535.9 423.0L536.3 418.7L536.8 415.4L537.3 413.3L537.8 412.5L538.3 413.1L538.8 414.8L539.3 417.4L539.8 420.9L540.2 425.1L540.7 429.9L541.2 435.2L541.7 441.0L542.2 447.1L542.7 453.4L543.2 460.0L543.7 466.8L544.1 473.6L544.6 480.5L545.1 487.5L545.6 494.4L546.1 501.4L546.6 497.5L547.1 493.6L547.6 489.7L548.1 485.9L548.6 482.1L549.1 478.4L549.7 474.9L550.2 471.6L550.7 468.6L551.2 465.9L551.7 463.7L552.2 461.9L552.7 460.8L553.2 460.4L553.7 460.9L554.2 462.4L554.8 464.7L555.3 467.7L555.8 471.1L556.3 474.9L556.8 479.0L557.3 483.3L557.9 487.8L558.4 492.3L558.9 496.8L559.4 501.4L559.9 501.4L560.4 501.4L560.9 501.4L561.4 501.4L561.9 501.4L562.4 501.4L563.0 501.4L563.5 501.4L564.0 501.4L564.5 501.4L565.0 501.4L565.5 501.4L566.0 501.4L566.5 494.3L567.0 487.2L567.5 480.1L568.0 473.0L568.5 466.1L569.0 459.3L569.5 452.8L570.1 446.5L570.6 440.7L571.1 435.4L571.6 430.7L572.1 426.8L572.6 423.8L573.1 421.9L573.6 421.2L574.1 422.0L574.6 424.2L575.1 427.6L575.6 432.0L576.1 437.2L576.6 443.1L577.1 449.6L577.6 456.5L578.1 463.6L578.6 471.0L579.1 478.5L579.6 486.1L580.1 493.8L580.6 501.4L581.1 501.4L581.6 501.4L582.1 501.4L582.6 501.4L583.1 501.4L583.6 501.4L584.2 501.4L584.7 501.4L585.2 501.4L585.7 501.4L586.2 501.4L586.7 501.4L587.2 501.4L587.7 499.3L588.2 497.3L588.7 495.2L589.2 493.2L589.7 491.3L590.2 489.4L590.7 487.7L591.2 486.1L591.7 484.8L592.2 483.7L592.7 483.0L593.2 482.8L593.7 483.1L594.2 484.1L594.8 485.5L595.3 487.3L595.8 489.4L596.3 491.6L596.8 494.0L597.4 496.4L597.9 498.9L598.4 501.4L598.9 501.4L599.4 501.4L599.8 501.4L600.3 501.4L600.8 501.4L601.3 501.4L601.8 495.8L602.3 490.3L602.8 484.7L603.2 479.2L603.7 473.8L604.2 468.5L604.7 463.4L605.2 458.5L605.7 453.9L606.2 449.8L606.7 446.1L607.1 443.1L607.6 440.7L608.1 439.2L608.6 438.7L609.1 439.2L609.6 440.8L610.1 443.4L610.6 446.9L611.1 451.1L611.6 456.0L612.1 461.2L612.6 466.7L613.1 472.2L613.6 477.4L614.1 482.3L614.6 486.5L615.1 490.0L615.6 492.6L616.1 494.2L616.6 494.7L617.1 494.5L617.6 493.8L618.1 492.6L618.6 491.2L619.1 489.5L619.6 487.7L620.1 485.8L620.6 484.1L621.1 482.7L621.6 481.5L622.1 480.8L622.6 480.6L623.1 480.8L623.6 481.5L624.1 482.5L624.7 483.8L625.2 485.3L625.7 487.0L626.2 488.9L626.7 490.9L627.2 492.9L627.8 495.0L628.3 497.1L628.8 499.3L629.3 501.4L629.8 497.5L630.3 493.6L630.8 489.7L631.3 485.9L631.9 482.0L632.4 478.3L632.9 474.6L633.4 471.0L633.9 467.6L634.4 464.4L634.9 461.4L635.4 458.7L636.0 456.4L636.5 454.4L637.0 453.0L637.5 452.0L638.0 451.7L638.5 451.9L639.0 452.5L639.5 453.5L639.9 454.9L640.4 456.5L640.9 458.3L641.4 460.1L641.9 462.0L642.4 463.8L642.9 465.4L643.3 466.8L643.8 467.8L644.3 468.4L644.8 468.6L645.3 468.5L645.8 468.1L646.3 467.5L646.8 466.8L647.4 466.0L647.9 465.3L648.4 464.7L648.9 464.3L649.4 464.2L649.9 464.4L650.4 465.1L650.9 466.2L651.4 467.6L652.0 469.3L652.5 471.3L653.0 473.5L653.5 475.8L654.0 478.3L654.5 480.9L655.0 483.6L655.5 486.3L656.1 489.1L656.6 491.9L657.1 494.7L657.6 497.6L658.1 500.4L658.6 498.9L659.1 497.4L659.6 495.8L660.1 494.3L660.6 492.9L661.1 491.4L661.6 490.0L662.2 488.7L662.7 487.5L663.2 486.3L663.7 485.3L664.2 484.5L664.7 483.9L665.2 483.4L665.7 483.3L666.2 483.5L666.7 484.1L667.2 484.9L667.7 486.1L668.2 487.4L668.7 488.9L669.3 490.5L669.8 492.2L670.3 494.0L670.8 495.8L671.3 497.7L671.8 499.5L672.3 501.4L672.8 501.4L673.3 501.4L673.8 501.4L674.3 501.4L674.8 501.4L675.3 501.4L675.8 501.4L676.3 501.4L676.8 501.4L677.3 501.4L677.8 501.4L678.3 501.4L678.8 501.4L679.3 496.1L679.8 490.7L680.3 485.4L680.7 480.2L681.2 475.0L681.7 469.9L682.2 465.0L682.7 460.4L683.2 456.0L683.7 452.0L684.2 448.5L684.6 445.6L685.1 443.4L685.6 441.9L686.1 441.4L686.6 441.9L687.1 443.4L687.6 445.6L688.1 448.5L688.6 452.0L689.1 456.0L689.6 460.4L690.0 465.0L690.5 469.9L691.0 475.0L691.5 480.2L692.0 485.4L692.5 490.7L693.0 496.1L693.5 501.4L694.0 501.4L694.5 501.4L695.0 501.4L695.5 501.4L696.0 501.4L696.5 501.4L697.0 501.4L697.5 501.4L698.0 501.4L698.5 501.4L699.0 501.4L699.5 501.4L700.0 501.4L700.5 497.0L701.0 492.7L701.5 488.3L702.0 483.9L702.5 479.6L703.0 475.2L703.5 470.9L704.1 466.5L704.6 462.1L705.1 457.8L705.6 453.4L706.1 449.0L706.6 444.7L707.1 440.3" fill="none" stroke="#4ecdc4" stroke-width="2.2" stroke-linejoin="round" clip-path="url(#cp)"/><path d="M291.7 501.4L292.2 501.4L292.7 501.4L293.2 501.4L293.7 501.4L294.2 501.4L294.7 501.4L295.2 501.4L295.7 501.4L296.2 501.4L296.7 501.4L297.2 501.4L297.7 501.4L298.2 501.4L298.7 501.4L299.2 501.4L299.7 501.4L300.2 501.4L300.7 501.4L301.2 501.4L301.7 501.4L302.2 501.4L302.7 501.4L303.2 501.4L303.7 501.4L304.2 501.4L304.7 501.4L305.2 501.4L305.7 501.4L306.2 501.4L306.7 501.4L307.2 501.4L307.7 501.4L308.2 501.4L308.7 501.4L309.2 501.4L309.7 501.4L310.2 501.4L310.7 501.4L311.2 501.4L311.7 501.4L312.2 501.4L312.7 501.4L313.2 501.4L313.7 501.4L314.2 501.4L314.7 501.4L315.2 501.4L315.7 501.4L316.2 501.4L316.7 501.4L317.2 501.4L317.7 501.4L318.2 501.4L318.7 501.4L319.2 501.4L319.7 501.4L320.2 501.4L320.7 501.4L321.2 501.4L321.7 501.4L322.2 501.4L322.7 501.4L323.2 501.4L323.7 501.4L324.2 501.4L324.7 501.4L325.2 501.4L325.7 501.4L326.2 501.4L326.7 501.4L327.2 501.4L327.7 501.4L328.2 501.4L328.7 501.4L329.2 501.4L329.7 501.4L330.1 501.4L330.6 501.4L331.1 501.4L331.6 501.4L332.1 501.4L332.6 501.4L333.1 501.4L333.6 501.4L334.1 501.4L334.6 501.4L335.1 501.4L335.6 501.4L336.1 501.4L336.6 501.4L337.1 501.4L337.6 501.4L338.1 501.4L338.6 501.4L339.1 501.4L339.6 501.4L340.1 501.4L340.6 501.4L341.1 501.4L341.6 501.4L342.1 501.4L342.6 501.4L343.1 501.4L343.6 501.4L344.1 501.4L344.6 501.4L345.1 501.4L345.6 501.4L346.1 501.4L346.6 501.4L347.1 501.4L347.6 501.4L348.1 501.4L348.6 501.4L349.1 501.4L349.6 501.4L350.1 501.4L350.6 501.4L351.1 501.4L351.6 501.4L352.1 501.4L352.6 501.4L353.1 501.4L353.6 501.4L354.1 501.4L354.6 501.4L355.1 501.4L355.6 501.4L356.1 501.4L356.6 501.4L357.1 501.4L357.6 501.4L358.1 501.4L358.6 501.4L359.1 501.4L359.6 501.4L360.1 501.4L360.6 501.4L361.1 501.4L361.6 501.4L362.1 501.4L362.6 501.4L363.1 501.4L363.6 501.4L364.1 501.4L364.6 501.4L365.1 501.4L365.6 501.4L366.1 501.4L366.6 501.4L367.1 501.4L367.6 501.4L368.1 501.4L368.6 501.4L369.1 501.4L369.6 501.4L370.1 501.4L370.6 501.4L371.1 501.4L371.6 501.4L372.1 501.4L372.6 501.4L373.1 501.4L373.6 501.4L374.1 501.4L374.6 501.4L375.1 501.4L375.6 501.4L376.1 501.4L376.6 501.4L377.1 501.4L377.6 501.4L378.1 501.4L378.6 501.4L379.1 501.4L379.6 501.4L380.1 501.4L380.6 501.4L381.1 501.4L381.6 501.4L382.1 501.4L382.6 501.4L383.1 501.4L383.6 501.4L384.1 501.4L384.6 501.4L385.1 501.4L385.6 501.4L386.1 501.4L386.6 501.4L387.1 501.4L387.6 501.4L388.1 501.4L388.6 501.4L389.1 501.4L389.6 501.4L390.1 501.4L390.6 501.4L391.1 501.4L391.6 501.4L392.1 501.4L392.6 501.4L393.1 501.4L393.6 501.4L394.1 501.4L394.6 501.4L395.1 501.4L395.6 501.4L396.1 501.4L396.6 501.4L397.1 501.4L397.6 501.4L398.1 501.4L398.6 501.4L399.1 501.4L399.6 501.4L400.1 501.4L400.6 501.4L401.1 501.4L401.6 501.4L402.1 501.4L402.6 501.4L403.1 501.4L403.6 501.4L404.1 501.4L404.6 501.4L405.1 501.4L405.6 501.4L406.0 501.4L406.5 501.4L407.0 501.4L407.5 501.4L408.0 501.4L408.5 501.4L409.0 501.4L409.5 501.4L410.0 501.4L410.5 501.4L411.0 501.4L411.5 501.4L412.0 501.4L412.5 501.4L413.0 501.4L413.5 501.4L414.0 501.4L414.5 501.4L415.0 501.4L415.5 501.4L416.0 501.4L416.5 501.4L417.0 501.4L417.5 501.4L418.0 501.4L418.5 501.4L419.0 501.4L419.5 501.4L420.0 501.4L420.5 501.4L421.0 501.4L421.5 501.4L422.0 501.4L422.5 501.4L423.0 501.4L423.5 501.4L424.0 501.4L424.5 501.4L425.0 501.4L425.5 501.4L426.0 501.4L426.5 501.4L427.0 501.4L427.5 501.4L428.0 501.4L428.5 501.4L429.0 501.4L429.5 501.4L430.0 501.4L430.5 501.4L431.0 501.4L431.5 501.4L432.0 501.4L432.5 501.4L433.0 501.4L433.5 501.4L434.0 501.4L434.5 501.4L435.0 501.4L435.5 501.4L436.0 501.4L436.5 501.4L437.0 501.4L437.5 501.4L438.0 501.4L438.5 501.4L439.0 501.4L439.5 501.4L440.0 501.4L440.5 501.4L441.0 501.4L441.5 501.4L442.0 501.4L442.5 501.4L443.0 501.4L443.5 501.4L444.0 501.4L444.5 500.8L445.0 500.2L445.5 499.5L446.0 498.9L446.5 498.3L447.0 497.7L447.5 497.1L448.0 496.6L448.5 496.0L449.0 495.4L449.5 494.9L450.0 494.5L450.5 494.0L451.0 493.6L451.5 493.3L452.0 493.0L452.5 492.8L453.0 492.6L453.5 492.6L454.0 492.6L454.5 492.8L455.0 493.0L455.5 493.3L456.0 493.6L456.5 494.0L457.0 494.5L457.5 494.9L458.0 495.4L458.5 496.0L459.0 496.6L459.5 497.1L460.0 497.7L460.5 498.3L461.0 498.9L461.5 499.5L462.0 500.2L462.5 500.8L463.0 501.4L463.5 501.4L464.0 501.4L464.5 501.4L465.0 501.4L465.5 501.4L466.0 501.4L466.5 501.4L467.0 501.4L467.5 501.2L468.0 501.0L468.5 500.8L469.0 500.6L469.5 500.3L470.0 500.1L470.5 499.9L470.9 499.8L471.4 499.6L471.9 499.4L472.4 499.3L472.9 499.2L473.4 499.1L473.9 499.0L474.4 499.0L474.9 499.0L475.4 499.1L475.9 499.2L476.4 499.3L476.9 499.4L477.4 499.6L477.9 499.8L478.5 499.9L479.0 500.1L479.5 500.3L480.0 500.6L480.5 500.8L481.0 501.0L481.5 501.2L482.0 501.4L482.5 501.4L483.0 501.4L483.5 501.4L484.0 501.4L484.5 501.4L485.0 501.4L485.5 501.4L486.0 501.4L486.5 501.4L487.0 501.4L487.5 501.4L488.0 501.4L488.5 501.4L489.0 501.4L489.5 501.4L490.0 501.4L490.5 501.4L491.0 501.4L491.5 501.0L492.0 500.7L492.5 500.3L493.0 499.9L493.5 499.5L493.9 499.2L494.4 498.8L494.9 498.4L495.4 498.1L495.9 497.7L496.4 497.4L496.9 497.1L497.4 496.8L497.9 496.4L498.4 496.2L498.9 495.9L499.4 495.6L499.9 495.4L500.3 495.2L500.8 495.0L501.3 494.9L501.8 494.8L502.3 494.7L502.8 494.7L503.3 494.8L503.8 494.9L504.3 495.1L504.9 495.4L505.4 495.8L505.9 496.2L506.4 496.6L506.9 497.1L507.4 497.6L507.9 498.1L508.4 498.6L508.9 499.2L509.5 499.7L510.0 500.3L510.5 500.8L511.0 501.4L511.5 501.0L512.0 500.6L512.5 500.2L513.0 499.8L513.5 499.4L514.0 499.1L514.5 498.7L515.0 498.4L515.5 498.1L516.0 497.9L516.5 497.7L517.0 497.5L517.5 497.5L518.0 497.5L518.5 497.6L519.0 497.8L519.5 498.0L520.0 498.2L520.5 498.4L521.0 498.7L521.5 499.0L522.0 499.4L522.5 499.7L523.0 500.0L523.5 500.4L524.0 500.7L524.5 501.1L525.0 501.4L525.5 501.4L526.0 501.4L526.5 501.4L527.0 501.4L527.5 501.4L528.0 501.4L528.5 501.4L529.0 501.4L529.5 501.4L530.0 501.4L530.5 501.1L531.0 500.9L531.5 500.6L532.0 500.4L532.5 500.1L533.0 499.9L533.5 499.6L534.1 499.4L534.6 499.2L535.1 499.0L535.6 498.8L536.1 498.7L536.6 498.6L537.1 498.5L537.6 498.5L538.1 498.5L538.6 498.6L539.1 498.7L539.6 498.8L540.1 498.9L540.6 499.1L541.1 499.2L541.6 499.4L542.0 499.6L542.5 499.8L543.0 500.1L543.5 500.3L544.0 500.5L544.5 500.7L545.0 500.9L545.5 501.2L546.0 501.4L546.5 501.2L547.0 501.1L547.5 500.9L548.0 500.7L548.5 500.6L549.0 500.4L549.5 500.2L550.0 500.1L550.5 500.0L551.0 499.8L551.5 499.7L552.0 499.7L552.5 499.6L553.0 499.6L553.5 499.6L554.0 499.7L554.5 499.8L555.0 499.9L555.5 500.1L556.0 500.2L556.5 500.4L557.0 500.6L557.5 500.8L558.0 501.0L558.5 501.2L559.0 501.4L559.5 501.4L560.0 501.4L560.5 501.4L561.0 501.4L561.5 501.4L562.0 501.4L562.5 501.4L563.0 501.4L563.5 501.4L564.0 501.4L564.5 501.4L565.0 501.4L565.5 501.4L566.0 501.4L566.5 501.2L567.0 501.0L567.5 500.8L568.0 500.6L568.5 500.4L569.0 500.2L569.5 500.0L570.1 499.8L570.6 499.7L571.1 499.5L571.6 499.4L572.1 499.3L572.6 499.2L573.1 499.1L573.6 499.1L574.1 499.1L574.6 499.2L575.1 499.3L575.6 499.4L576.1 499.5L576.6 499.7L577.1 499.8L577.5 500.0L578.0 500.2L578.5 500.4L579.0 500.6L579.5 500.8L580.0 501.0L580.5 501.2L581.0 501.4L581.5 501.3L582.0 501.3L582.5 501.2L583.0 501.1L583.5 501.1L584.0 501.0L584.5 500.9L585.0 500.9L585.5 500.8L586.0 500.7L586.5 500.7L587.0 500.6L587.5 500.6L588.0 500.5L588.5 500.5L589.0 500.4L589.5 500.4L590.0 500.3L590.5 500.3L591.0 500.3L591.5 500.2L592.0 500.2L592.5 500.2L593.0 500.2L593.5 500.2L594.0 500.2L594.5 500.3L595.0 500.3L595.5 500.4L596.0 500.5L596.5 500.5L597.0 500.6L597.5 500.7L598.0 500.8L598.5 500.9L599.0 501.0L599.5 501.1L600.0 501.2L600.5 501.3L601.0 501.4L601.5 501.2L602.0 501.1L602.5 500.9L603.0 500.8L603.5 500.6L604.0 500.5L604.5 500.3L605.1 500.2L605.6 500.0L606.1 499.9L606.6 499.8L607.1 499.7L607.6 499.7L608.1 499.6L608.6 499.6L609.1 499.6L609.6 499.6L610.1 499.7L610.6 499.7L611.1 499.7L611.6 499.8L612.0 499.8L612.5 499.9L613.0 499.9L613.5 499.9L614.0 500.0L614.5 500.0L615.0 500.0L615.5 500.0L616.0 500.0L616.5 500.0L617.0 500.0L617.5 499.9L618.0 499.9L618.5 499.9L619.0 499.9L619.5 499.9L620.0 499.8L620.5 499.8L621.0 499.8L621.5 499.8L622.0 499.8L622.5 499.8L623.0 499.9L623.5 500.0L624.0 500.1L624.5 500.2L625.0 500.4L625.5 500.5L626.0 500.7L626.5 500.9L627.0 501.0L627.5 501.2L628.0 501.4L628.5 500.7L629.0 499.9L629.5 499.2L630.0 498.5L630.5 497.8L631.0 497.0L631.5 496.3L632.0 495.7L632.5 495.0L632.9 494.4L633.4 493.8L633.9 493.3L634.4 492.8L634.9 492.3L635.4 492.0L635.9 491.7L636.4 491.6L636.9 491.5L637.4 491.6L637.9 491.8L638.4 492.1L638.9 492.5L639.4 493.1L639.9 493.7L640.4 494.3L641.0 495.0L641.5 495.7L642.0 496.5L642.5 497.3L643.0 498.1L643.5 498.9L644.0 499.8L644.5 500.6L645.0 501.4L645.5 501.2L646.0 501.0L646.5 500.8L647.0 500.6L647.5 500.4L648.0 500.2L648.5 500.0L649.0 499.9L649.5 499.8L650.0 499.8L650.5 499.8L651.0 499.8L651.5 499.8L652.0 499.8L652.5 499.8L653.0 499.8L653.5 499.8L654.0 499.8L654.5 499.8L655.0 499.8L655.5 499.8L656.0 499.8L656.5 499.8L657.0 499.8L657.5 499.8L658.0 499.8L658.5 499.8L659.0 499.8L659.5 499.8L660.0 499.8L660.5 499.8L661.0 499.8L661.5 499.8L662.0 499.8L662.5 499.8L663.0 499.8L663.5 499.8L664.0 499.8L664.5 499.8L665.0 499.8L665.5 499.8L666.0 499.8L666.5 499.8L667.0 499.8L667.5 499.8L668.0 499.8L668.5 499.8L669.0 499.9L669.5 500.0L670.0 500.2L670.5 500.4L671.0 500.6L671.5 500.8L672.0 501.0L672.5 501.2L673.0 501.4L673.5 501.4L674.0 501.4L674.5 501.4L675.0 501.4L675.5 501.4L676.0 501.4L676.5 501.4L677.0 501.4L677.5 501.4L678.0 501.4L678.5 501.4L679.0 501.4L679.5 501.1L680.0 500.8L680.5 500.6L681.0 500.3L681.5 500.0L682.0 499.8L682.5 499.5L683.1 499.3L683.6 499.1L684.1 498.9L684.6 498.7L685.1 498.6L685.6 498.5L686.1 498.5L686.6 498.5L687.1 498.6L687.6 498.7L688.1 498.9L688.6 499.1L689.1 499.3L689.5 499.5L690.0 499.8L690.5 500.0L691.0 500.3L691.5 500.6L692.0 500.8L692.5 501.1L693.0 501.4L693.5 501.4L694.0 501.4L694.5 501.4L695.0 501.4L695.5 501.4L696.0 501.4L696.5 501.4L697.0 501.4L697.5 501.4L698.0 501.4L698.5 501.4L699.0 501.4L699.5 501.4L700.0 501.4L700.5 501.2L701.0 501.0L701.5 500.8L702.0 500.7L702.5 500.5L703.0 500.3L703.5 500.1L704.0 500.0L704.5 499.8L705.0 499.7L705.5 499.5L706.0 499.4L706.5 499.4L707.0 499.3L707.5 499.3" fill="none" stroke="#ec6a5e" stroke-width="2.1" stroke-linejoin="round" clip-path="url(#cr)"/><text transform="translate(489 383.4) scale(0.96 1)" text-anchor="middle" font-family="Liberation Sans" font-weight="bold" font-size="12.6" fill="#2f3640">Real-Time Network Performance</text><text transform="translate(287.8 396.7) scale(0.78 1)" text-anchor="end" font-family="Liberation Sans" font-size="9.3" fill="#3d4248" stroke="#3d4248" stroke-width="0.15">213.7</text><text transform="translate(287.8 423.7) scale(0.78 1)" text-anchor="end" font-family="Liberation Sans" font-size="9.3" fill="#3d4248" stroke="#3d4248" stroke-width="0.15">160.2</text><text transform="translate(287.8 450.7) scale(0.78 1)" text-anchor="end" font-family="Liberation Sans" font-size="9.3" fill="#3d4248" stroke="#3d4248" stroke-width="0.15">106.8</text><text transform="translate(287.8 477.8) scale(0.78 1)" text-anchor="end" font-family="Liberation Sans" font-size="9.3" fill="#3d4248" stroke="#3d4248" stroke-width="0.15">53.4</text><text transform="translate(287.8 504.8) scale(0.78 1)" text-anchor="end" font-family="Liberation Sans" font-size="9.3" fill="#3d4248" stroke="#3d4248" stroke-width="0.15">0.0</text><text transform="translate(291.7 513.2) scale(0.8 1)" text-anchor="middle" font-family="Liberation Sans" font-size="9.3" fill="#3d4248" stroke="#3d4248" stroke-width="0.15">0.0</text><text transform="translate(397.3 513.2) scale(0.8 1)" text-anchor="middle" font-family="Liberation Sans" font-size="9.3" fill="#3d4248" stroke="#3d4248" stroke-width="0.15">15.0</text><text transform="translate(502.9 513.2) scale(0.8 1)" text-anchor="middle" font-family="Liberation Sans" font-size="9.3" fill="#3d4248" stroke="#3d4248" stroke-width="0.15">30.0</text><text transform="translate(608.6 513.2) scale(0.8 1)" text-anchor="middle" font-family="Liberation Sans" font-size="9.3" fill="#3d4248" stroke="#3d4248" stroke-width="0.15">45.0</text><text transform="translate(706 513.2) scale(0.8 1)" font-family="Liberation Sans" font-size="9.3" fill="#3d4248" stroke="#3d4248" stroke-width="0.15">60</text><text transform="translate(502.6 525.6) scale(0.9 1)" text-anchor="middle" font-family="Liberation Sans" font-weight="bold" font-size="8.4" fill="#222">Time (seconds)</text><text transform="translate(264.2 447.2) rotate(-90) scale(0.92 1)" text-anchor="middle" font-family="Liberation Sans" font-weight="bold" font-size="8.4" fill="#222">Traffic (KB/s)</text><rect x="418.5" y="540" width="5.5" height="5.5" rx="1" fill="#ec6a5e" stroke="#c05048" stroke-width="0.5"/><text transform="translate(426.4 546.2) scale(0.95 1)" font-family="Liberation Sans" font-size="8.2" fill="#3d4248" stroke="#3d4248" stroke-width="0.12">Upload (KB/s)</text><rect x="479.5" y="540" width="5.5" height="5.5" rx="1" fill="#4ecdc4" stroke="#3aa89f" stroke-width="0.5"/><text transform="translate(487.7 546.2) scale(0.955 1)" font-family="Liberation Sans" font-size="8.2" fill="#3d4248" stroke="#3d4248" stroke-width="0.12">Download (KB/s)</text></svg>
<div class="t" style="left:798.10px;top:316.87px;font-size:9.00px;font-weight:bold;color:#34495e;font-family:'Liberation Sans',sans-serif;">System Status</div>
<div class="t" style="left:798.10px;top:369.57px;font-size:9.00px;font-weight:bold;color:#34495e;font-family:'Liberation Sans',sans-serif;">CPU Usage:</div>
<div class="t" style="left:798.10px;top:415.57px;font-size:9.00px;font-weight:bold;color:#34495e;font-family:'Liberation Sans',sans-serif;">Memory Usage:</div>
<div class="t" style="left:798.10px;top:461.77px;font-size:9.00px;font-weight:bold;color:#34495e;font-family:'Liberation Sans',sans-serif;">Disk Usage:</div>
<div class="t" style="left:798.10px;top:509.07px;font-size:9.00px;font-weight:bold;color:#34495e;font-family:'Liberation Sans',sans-serif;">Network Status:</div>
<div class="bar" style="left:873.7px;top:368.0px;width:214.0px"><div class="chunk" style="width:28.0px;background:#ec6a5e"></div></div>
<div class="t r" style="left:972.00px;top:370.00px;font-size:8.82px;font-weight:normal;color:#222;font-family:'Liberation Sans',sans-serif;transform:scaleX(0.8499);transform-origin:0 0;">13%</div>
<div class="bar" style="left:889.2px;top:414.2px;width:198.3px"><div class="chunk" style="width:138.3px;background:#4ecdc4"></div></div>
<div class="t r" style="left:979.30px;top:416.20px;font-size:8.82px;font-weight:normal;color:#222;font-family:'Liberation Sans',sans-serif;transform:scaleX(0.9292);transform-origin:0 0;">70%</div>
<div class="bar" style="left:873.7px;top:460.2px;width:214.0px"><div class="chunk" style="width:34.5px;background:#3ba4d9"></div></div>
<div class="t r" style="left:972.00px;top:462.20px;font-size:8.82px;font-weight:normal;color:#222;font-family:'Liberation Sans',sans-serif;transform:scaleX(0.8499);transform-origin:0 0;">16%</div>
<div class="t" style="left:1110.60px;top:369.90px;font-size:9.45px;font-weight:bold;color:#e8685e;font-family:'Liberation Sans',sans-serif;transform:scaleX(0.9332);transform-origin:0 0;">13.5%</div>
<div class="t" style="left:1110.60px;top:415.90px;font-size:9.45px;font-weight:bold;color:#4ecdc4;font-family:'Liberation Sans',sans-serif;transform:scaleX(0.9332);transform-origin:0 0;">70.5%</div>
<div class="t" style="left:1110.60px;top:462.10px;font-size:9.45px;font-weight:bold;color:#42a6dc;font-family:'Liberation Sans',sans-serif;transform:scaleX(0.9332);transform-origin:0 0;">16.6%</div>
<div class="a" style="left:1080.5px;top:509.2px;width:8.6px;height:8.6px;border-radius:50%;background:#6ab34e"></div>
<div class="t" style="left:1092.30px;top:508.70px;font-size:9.45px;font-weight:bold;color:#5aac44;font-family:'Liberation Sans',sans-serif;transform:scaleX(0.9052);transform-origin:0 0;">Connected</div>
<div class="a" style="left:232px;top:684.3px;width:22px;height:28.5px;background:linear-gradient(#f8f8f8,#ececec);border-bottom:1px solid #c8c8c8"></div>
<div class="a" style="left:254px;top:712.5px;width:869px;height:20px;border-bottom:1px solid #e0e0e0;border-right:1px solid #e0e0e0"></div>
<div class="a" style="left:276.0px;top:712.5px;width:1px;height:20px;background:#e4e4e4"></div>
<div class="a" style="left:299.5px;top:712.5px;width:1px;height:20px;background:#e4e4e4"></div>
<div class="a" style="left:323.0px;top:712.5px;width:1px;height:20px;background:#e4e4e4"></div>
<div class="a" style="left:348.0px;top:712.5px;width:1px;height:20px;background:#e4e4e4"></div>
<div class="a" style="left:372.0px;top:712.5px;width:1px;height:20px;background:#e4e4e4"></div>
<div class="a" style="left:396.0px;top:712.5px;width:1px;height:20px;background:#e4e4e4"></div>
<div class="a" style="left:225.5px;top:888.5px;width:936.5px;height:66px;background:#f8f8f8;border:1px solid #e4e4e4;border-radius:5px"></div>
<div class="t m" style="left:239.40px;top:904.43px;font-size:7.15px;font-weight:normal;color:#3a3a3a;font-family:'Liberation Mono',monospace;">[18:31:10] INFO: i Dashboard refresh completed</div>
<div class="t m" style="left:239.40px;top:914.43px;font-size:7.15px;font-weight:normal;color:#3a3a3a;font-family:'Liberation Mono',monospace;">[18:31:10] INFO: i Dashboard data refresh initiated</div>
<div class="t m" style="left:239.40px;top:924.43px;font-size:7.15px;font-weight:normal;color:#3a3a3a;font-family:'Liberation Mono',monospace;">Error loading activity log: 'DashboardWidget' object has no attribute 'db_path'</div>
<div class="t" style="left:11.40px;top:996.67px;font-size:9.66px;font-weight:bold;color:#585858;font-family:'Liberation Sans',sans-serif;transform:scaleX(0.9024);transform-origin:0 0;">Dashboard - System Overview</div>
<div class="t" style="left:661.00px;top:996.50px;font-size:9.45px;font-weight:bold;color:#3a3a3a;font-family:'Liberation Sans',sans-serif;transform:scaleX(0.8227);transform-origin:0 0;">CPU:</div>
<div class="t" style="left:922.30px;top:996.50px;font-size:9.45px;font-weight:bold;color:#3a3a3a;font-family:'Liberation Sans',sans-serif;transform:scaleX(0.9318);transform-origin:0 0;">Memory:</div>
<div class="a" style="left:853.5px;top:998px;width:64px;height:7.5px;border:1px solid #dcdcdc;border-radius:1.5px;background:#fff"></div>
<div class="a" style="left:853.5px;top:998px;width:8px;height:7.5px;border-radius:1.5px;background:#0a7bf5"></div>
<div class="t r" style="left:878.00px;top:997.47px;font-size:8.40px;font-weight:normal;color:#222;font-family:'Liberation Sans',sans-serif;transform:scaleX(0.8924);transform-origin:0 0;">13%</div>
<div class="a" style="left:1114.8px;top:997.5px;width:63.7px;height:8px;border:1px solid #dcdcdc;border-radius:1.5px;background:#fff"></div>
<div class="a" style="left:1114.8px;top:997.5px;width:43.7px;height:8px;border-radius:1.5px;background:#0a7bf5"></div>
<div class="t r" style="left:1138.00px;top:997.47px;font-size:8.40px;font-weight:normal;color:#1a2a50;font-family:'Liberation Sans',sans-serif;transform:scaleX(0.8924);transform-origin:0 0;">70%</div>
</body></html>
